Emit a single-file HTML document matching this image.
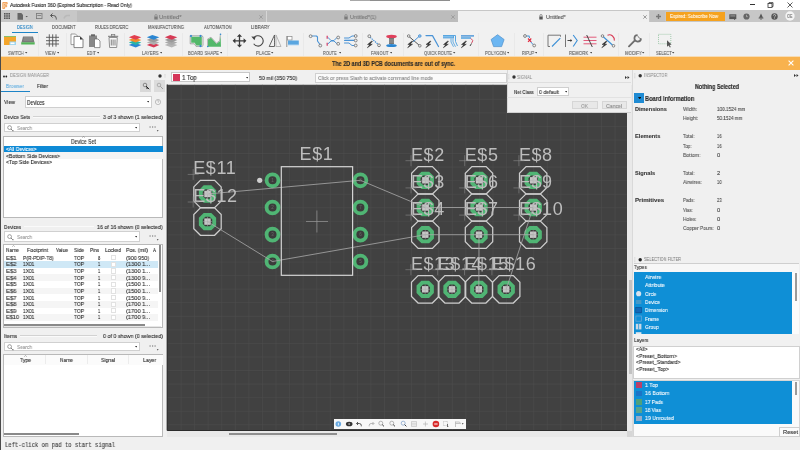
<!DOCTYPE html><html><head><meta charset="utf-8"><style>*{margin:0;padding:0;box-sizing:border-box}html,body{width:800px;height:450px;overflow:hidden;background:#f0f0f0;font-family:"Liberation Sans",sans-serif;color:#333}.a{position:absolute}.t{position:absolute;white-space:nowrap;line-height:1;transform-origin:0 50%;will-change:transform;-webkit-text-stroke:0.12px currentColor}</style></head><body>
<div class="a" style="left:0px;top:0px;width:800px;height:10.5px;background:#ffffff;"></div>
<svg class="a" style="left:2px;top:2px" width="6" height="7" viewBox="0 0 6 7"><path d="M0.8 0.5h4.4v1.6h-2.6v1.2h2.1v1.5h-2.1v1.8h-1.8z" fill="#f9d9b5" stroke="#f08a2e" stroke-width="0.7"/></svg>
<div class="a" style="left:750px;top:4.3px;width:4.5px;height:0.8px;background:#333;"></div>
<svg class="a" style="left:767px;top:1.5px" width="7" height="6" viewBox="0 0 7 6"><rect x="1" y="1.5" width="4" height="4" fill="none" stroke="#333" stroke-width="0.8"/><path d="M2 1.5V0.6h4v4h-1" fill="none" stroke="#333" stroke-width="0.8"/></svg>
<svg class="a" style="left:787px;top:1.5px" width="6" height="6" viewBox="0 0 6 6"><path d="M0.5 0.5L5.5 5.5M5.5 0.5L0.5 5.5" stroke="#333" stroke-width="0.8"/></svg>
<div class="a" style="left:1px;top:10px;width:799px;height:12.2px;background:#c7c7c7;"></div>
<div class="a" style="left:76.6px;top:10.5px;width:189.7px;height:11.7px;background:#bcbcbc;"></div>
<div class="a" style="left:266.3px;top:10.5px;width:192.1px;height:11.7px;background:#bcbcbc;"></div>
<div class="a" style="left:266px;top:11px;width:0.7px;height:11px;background:#d6d6d6;"></div>
<div class="a" style="left:458.4px;top:11.2px;width:191.1px;height:11px;background:#f0f0f0;"></div>
<div class="a" style="left:649.5px;top:10.5px;width:15px;height:12px;background:#c2c2c2;"></div>
<div class="a" style="left:666px;top:11.5px;width:58.5px;height:9.5px;background:#f5a21f;"></div>
<svg class="a" style="left:651px;top:11px" width="14" height="11" viewBox="0 0 14 11"><path d="M5 5.5h5M7.5 3v5" stroke="#777" stroke-width="1.4"/></svg>
<svg class="a" style="left:153.8px;top:13.5px" width="4" height="6" viewBox="0 0 4 6"><path d="M0.9 2.6V1.6a1.1 1.1 0 0 1 2.2 0v1" fill="none" stroke="#7a7a7a" stroke-width="0.6"/><rect x="0.3" y="2.5" width="3.4" height="3" fill="#7a7a7a"/></svg>
<svg class="a" style="left:344.2px;top:13.5px" width="4" height="6" viewBox="0 0 4 6"><path d="M0.9 2.6V1.6a1.1 1.1 0 0 1 2.2 0v1" fill="none" stroke="#7a7a7a" stroke-width="0.6"/><rect x="0.3" y="2.5" width="3.4" height="3" fill="#7a7a7a"/></svg>
<svg class="a" style="left:539.2px;top:13.5px" width="4" height="6" viewBox="0 0 4 6"><path d="M0.9 2.6V1.6a1.1 1.1 0 0 1 2.2 0v1" fill="none" stroke="#555" stroke-width="0.6"/><rect x="0.3" y="2.5" width="3.4" height="3" fill="#555"/></svg>
<svg class="a" style="left:259.4px;top:14.5px" width="4" height="4" viewBox="0 0 4 4"><path d="M0.3 0.3L3.7 3.7M3.7 0.3L0.3 3.7" stroke="#8a8a8a" stroke-width="0.6"/></svg>
<svg class="a" style="left:450.8px;top:14.5px" width="4" height="4" viewBox="0 0 4 4"><path d="M0.3 0.3L3.7 3.7M3.7 0.3L0.3 3.7" stroke="#8a8a8a" stroke-width="0.6"/></svg>
<svg class="a" style="left:642.5px;top:14.5px" width="4" height="4" viewBox="0 0 4 4"><path d="M0.3 0.3L3.7 3.7M3.7 0.3L0.3 3.7" stroke="#666" stroke-width="0.6"/></svg>
<svg class="a" style="left:4px;top:13px" width="6.5" height="6.5" viewBox="0 0 6.5 6.5" fill="#555"><rect x="0.0" y="0.0" width="1.6" height="1.6"/><rect x="0.0" y="2.2" width="1.6" height="1.6"/><rect x="0.0" y="4.4" width="1.6" height="1.6"/><rect x="2.2" y="0.0" width="1.6" height="1.6"/><rect x="2.2" y="2.2" width="1.6" height="1.6"/><rect x="2.2" y="4.4" width="1.6" height="1.6"/><rect x="4.4" y="0.0" width="1.6" height="1.6"/><rect x="4.4" y="2.2" width="1.6" height="1.6"/><rect x="4.4" y="4.4" width="1.6" height="1.6"/></svg>
<svg class="a" style="left:17px;top:12.8px" width="12" height="7" viewBox="0 0 12 7"><path d="M0.5 0h3.8l1.7 1.7V6.8H0.5z" fill="#666"/><path d="M8.5 3h2.4l-1.2 1.3z" fill="#555"/></svg>
<svg class="a" style="left:36px;top:13.3px" width="6.5" height="6" viewBox="0 0 6.5 6"><rect x="0.4" y="0.4" width="5.6" height="5.2" fill="none" stroke="#777" stroke-width="0.8"/><rect x="1.3" y="2.2" width="3.8" height="0.8" fill="#777"/></svg>
<svg class="a" style="left:50px;top:13.3px" width="7" height="6.5" viewBox="0 0 7 6.5"><path d="M2.5 0.5L0.5 2.5l2 2" fill="none" stroke="#555" stroke-width="1"/><path d="M0.8 2.5h2.5a3 3 0 0 1 3 3v1" fill="none" stroke="#555" stroke-width="1"/></svg>
<svg class="a" style="left:63px;top:13.5px" width="8" height="5" viewBox="0 0 8 5"><path d="M1 4.5Q2 1 5 1.5h2" fill="none" stroke="#b9b9b9" stroke-width="1.4"/></svg>
<svg class="a" style="left:729px;top:13.5px" width="8" height="6.5" viewBox="0 0 8 6.5"><rect x="0.3" y="0.3" width="7" height="4.8" fill="#555"/><path d="M5 5v1.3l1.3-1.3z" fill="#555"/><rect x="1.3" y="1.6" width="5" height="0.7" fill="#bbb"/></svg>
<svg class="a" style="left:743px;top:12.8px" width="7" height="7" viewBox="0 0 7 7"><circle cx="3.5" cy="3.5" r="3.1" fill="#666"/><path d="M3.5 1.8v1.9h1.3" fill="none" stroke="#ccc" stroke-width="0.6"/></svg>
<svg class="a" style="left:757.5px;top:12.5px" width="6" height="7" viewBox="0 0 6 7"><path d="M3 0.4L5 4.8H1z" fill="#555"/><rect x="0.6" y="4.6" width="4.8" height="0.9" fill="#555"/><circle cx="3" cy="6.2" r="0.6" fill="#555"/></svg>
<svg class="a" style="left:770.5px;top:12.5px" width="7" height="7" viewBox="0 0 7 7"><circle cx="3.5" cy="3.5" r="3.2" fill="#555"/><path d="M2.4 2.6a1.1 1.1 0 1 1 1.5 1l-0.4 0.3v0.6" fill="none" stroke="#ddd" stroke-width="0.7"/><circle cx="3.5" cy="5.4" r="0.4" fill="#ddd"/></svg>
<svg class="a" style="left:785px;top:11px" width="10" height="10" viewBox="0 0 10 10"><circle cx="5" cy="5" r="4.7" fill="#f4f4f4"/></svg>
<div class="a" style="left:1px;top:22.2px;width:799px;height:34.5px;background:#f1f1f1;"></div>
<div class="a" style="left:12.3px;top:31.7px;width:25.9px;height:1.3px;background:#1d84c7;"></div>
<div class="a" style="left:38.2px;top:33px;width:0.6px;height:23px;background:#e9e9e9;"></div>
<div class="a" style="left:65.5px;top:33px;width:0.6px;height:23px;background:#e9e9e9;"></div>
<div class="a" style="left:123.5px;top:33px;width:0.6px;height:23px;background:#e9e9e9;"></div>
<div class="a" style="left:181.7px;top:33px;width:0.6px;height:23px;background:#e9e9e9;"></div>
<div class="a" style="left:227.3px;top:33px;width:0.6px;height:23px;background:#e9e9e9;"></div>
<div class="a" style="left:303px;top:33px;width:0.6px;height:23px;background:#e9e9e9;"></div>
<div class="a" style="left:361.6px;top:33px;width:0.6px;height:23px;background:#e9e9e9;"></div>
<div class="a" style="left:402.6px;top:33px;width:0.6px;height:23px;background:#e9e9e9;"></div>
<div class="a" style="left:478px;top:33px;width:0.6px;height:23px;background:#e9e9e9;"></div>
<div class="a" style="left:514px;top:33px;width:0.6px;height:23px;background:#e9e9e9;"></div>
<div class="a" style="left:542.6px;top:33px;width:0.6px;height:23px;background:#e9e9e9;"></div>
<div class="a" style="left:618px;top:33px;width:0.6px;height:23px;background:#e9e9e9;"></div>
<div class="a" style="left:649.4px;top:33px;width:0.6px;height:23px;background:#e9e9e9;"></div>
<svg class="a" style="left:25.400000000000002px;top:52px" width="2.4" height="1.6" viewBox="0 0 2.4 1.6"><path d="M0 0h2.4l-1.2 1.6z" fill="#444"/></svg>
<svg class="a" style="left:56.599999999999994px;top:52px" width="2.4" height="1.6" viewBox="0 0 2.4 1.6"><path d="M0 0h2.4l-1.2 1.6z" fill="#444"/></svg>
<svg class="a" style="left:96.8px;top:52px" width="2.4" height="1.6" viewBox="0 0 2.4 1.6"><path d="M0 0h2.4l-1.2 1.6z" fill="#444"/></svg>
<svg class="a" style="left:159.8px;top:52px" width="2.4" height="1.6" viewBox="0 0 2.4 1.6"><path d="M0 0h2.4l-1.2 1.6z" fill="#444"/></svg>
<svg class="a" style="left:219.8px;top:52px" width="2.4" height="1.6" viewBox="0 0 2.4 1.6"><path d="M0 0h2.4l-1.2 1.6z" fill="#444"/></svg>
<svg class="a" style="left:271.40000000000003px;top:52px" width="2.4" height="1.6" viewBox="0 0 2.4 1.6"><path d="M0 0h2.4l-1.2 1.6z" fill="#444"/></svg>
<svg class="a" style="left:338.6px;top:52px" width="2.4" height="1.6" viewBox="0 0 2.4 1.6"><path d="M0 0h2.4l-1.2 1.6z" fill="#444"/></svg>
<svg class="a" style="left:389.8px;top:52px" width="2.4" height="1.6" viewBox="0 0 2.4 1.6"><path d="M0 0h2.4l-1.2 1.6z" fill="#444"/></svg>
<svg class="a" style="left:453.40000000000003px;top:52px" width="2.4" height="1.6" viewBox="0 0 2.4 1.6"><path d="M0 0h2.4l-1.2 1.6z" fill="#444"/></svg>
<svg class="a" style="left:506.8px;top:52px" width="2.4" height="1.6" viewBox="0 0 2.4 1.6"><path d="M0 0h2.4l-1.2 1.6z" fill="#444"/></svg>
<svg class="a" style="left:534.8px;top:52px" width="2.4" height="1.6" viewBox="0 0 2.4 1.6"><path d="M0 0h2.4l-1.2 1.6z" fill="#444"/></svg>
<svg class="a" style="left:589.5px;top:52px" width="2.4" height="1.6" viewBox="0 0 2.4 1.6"><path d="M0 0h2.4l-1.2 1.6z" fill="#444"/></svg>
<svg class="a" style="left:642.4px;top:52px" width="2.4" height="1.6" viewBox="0 0 2.4 1.6"><path d="M0 0h2.4l-1.2 1.6z" fill="#444"/></svg>
<svg class="a" style="left:672.4px;top:52px" width="2.4" height="1.6" viewBox="0 0 2.4 1.6"><path d="M0 0h2.4l-1.2 1.6z" fill="#444"/></svg>
<div class="a" style="left:1px;top:55.8px;width:799px;height:1px;background:#f7dcb4;"></div>
<div class="a" style="left:1px;top:56.7px;width:799px;height:13.3px;background:#f8b24e;"></div>
<svg class="a" style="left:787.5px;top:60px" width="6" height="6" viewBox="0 0 6 6"><path d="M0.6 0.6L5.4 5.4M5.4 0.6L0.6 5.4" stroke="#fff" stroke-width="1.1"/></svg>
<div class="a" style="left:0px;top:0px;width:1.3px;height:450px;background:#4a4a4a;"></div>
<svg class="a" style="left:0;top:0" width="800" height="60" viewBox="0 0 800 60"><rect x="4" y="36" width="12" height="9" fill="#f4a52a"/><rect x="4" y="36" width="12" height="1" fill="#8bbf6a"/><rect x="9.5" y="41.5" width="6.5" height="3.5" fill="#9ed5ef"/><rect x="10.5" y="42.5" width="4" height="1.6" fill="#fff"/><path d="M23 36.5h10l1.5 6h-13z" fill="#7a7a7a"/><path d="M24 38h8M23.5 40h9" stroke="#bbb" stroke-width="0.5"/><rect x="21.2" y="42.3" width="13.5" height="2.2" fill="#55b55a"/><path d="M49.3 34.3v12.4M52.7 34.3v12.4M56 34.3v12.4M46 37.3h13M46 40.7h13M46 44h13" stroke="#555" stroke-width="0.9"/><path d="M71 34h4.5l2 2v8.6H71z" fill="#fff" stroke="#777" stroke-width="0.7"/><path d="M74 36.4h6l3 3v8.2H74z" fill="#fff" stroke="#666" stroke-width="0.8"/><path d="M80 36.4l3 3h-3z" fill="#333"/><path d="M89 35.5h8v11.5h-8z" fill="#888"/><rect x="91" y="34.3" width="4" height="2" fill="#666"/><path d="M94.5 39h3.5l2 2v6.6h-5.5z" fill="#fff" stroke="#666" stroke-width="0.7"/><path d="M108 36.3h10.2" stroke="#777" stroke-width="1"/><rect x="111.5" y="34.6" width="3.3" height="1.6" fill="none" stroke="#777" stroke-width="0.7"/><path d="M109 37.5h8.3l-0.6 10h-7.1z" fill="#f6f6f6" stroke="#777" stroke-width="0.8"/><path d="M111.3 39.5v6M113.1 39.5v6M115 39.5v6" stroke="#777" stroke-width="0.9"/><path d="M128.8 45.099999999999994L134.3 42.8L141.3 45.099999999999994L135.8 47.599999999999994z" fill="#2a86d2"/><path d="M128.8 42.5L134.3 40.2L141.3 42.5L135.8 45.0z" fill="#26b5a8"/><path d="M128.8 39.9L134.3 37.6L141.3 39.9L135.8 42.4z" fill="#f08c2c"/><path d="M128.8 37.3L134.3 35.0L141.3 37.3L135.8 39.8z" fill="#e23f4f"/><path d="M146.8 45.099999999999994L152.3 42.8L159.3 45.099999999999994L153.8 47.599999999999994z" fill="#d63a55"/><path d="M146.8 42.5L152.3 40.2L159.3 42.5L153.8 45.0z" fill="#b0b0b0"/><path d="M146.8 39.9L152.3 37.6L159.3 39.9L153.8 42.4z" fill="#9a9a9a"/><path d="M146.8 37.3L152.3 35.0L159.3 37.3L153.8 39.8z" fill="#2a86d2"/><path d="M164.8 45.099999999999994L170.3 42.8L177.3 45.099999999999994L171.8 47.599999999999994z" fill="#b5b5b5"/><path d="M164.8 42.5L170.3 40.2L177.3 42.5L171.8 45.0z" fill="#aaaaaa"/><path d="M164.8 39.9L170.3 37.6L177.3 39.9L171.8 42.4z" fill="#9a9a9a"/><path d="M164.8 37.3L170.3 35.0L177.3 37.3L171.8 39.8z" fill="#d63a55"/><path d="M190.2 35.8h12l0.8 1.2v8.6l-0.8 0.8h-6.2l-1.6-2.6h-4.2z" fill="#f1f1f1" stroke="#8a8a8a" stroke-width="0.7"/><path d="M191.2 36.8h10.6v8.6h-5.5l-1.6-2.6h-3.5z" fill="#53b86a"/><circle cx="191" cy="36" r="0.9" fill="#2a86d2" stroke="#2a86d2" stroke-width="0.3"/><circle cx="200.5" cy="36" r="0.9" fill="#2a86d2" stroke="#2a86d2" stroke-width="0.3"/><circle cx="200.5" cy="46" r="0.9" fill="#2a86d2" stroke="#2a86d2" stroke-width="0.3"/><path d="M208 46.8V39.5L211 37.8L216.5 43.8L219.8 41.2L220.6 35.5L221 46.8z" fill="#53b86a"/><path d="M207.6 46.8V39L211 37.2L216.5 43.2L219.6 40.6L220.4 34.5" fill="none" stroke="#8a8a8a" stroke-width="0.6"/><circle cx="220.5" cy="34.3" r="0.8" fill="#2a86d2"/><circle cx="207.8" cy="46.5" r="0.8" fill="#2a86d2"/><path d="M239.5 36v9.6M234.5 40.8h10" stroke="#3a3a3a" stroke-width="1.3"/><path d="M239.5 34l-2.6 2.8h5.2zM239.5 47.6l-2.6-2.8h5.2zM232.6 40.8l2.8-2.6v5.2zM246.4 40.8l-2.8-2.6v5.2z" fill="#3a3a3a"/><path d="M253.5 38.3a5.2 5.2 0 1 1 0.2 5.5" fill="none" stroke="#444" stroke-width="1.1"/><path d="M251.3 36.5l3.2 3.8l1.2-3.5z" fill="#444"/><path d="M274.5 35l-5.3 11.5h5.3z" fill="none" stroke="#555" stroke-width="0.9"/><path d="M276 35l5 11.5h-5z" fill="none" stroke="#aaa" stroke-width="0.8"/><path d="M275.2 34v13.5" stroke="#ccc" stroke-width="0.5" stroke-dasharray="1 1"/><path d="M286.8 36v11" stroke="#888" stroke-width="0.9"/><rect x="287.5" y="36.5" width="4.5" height="3.5" fill="#fff" stroke="#888" stroke-width="0.7"/><rect x="288" y="40.5" width="10.8" height="4.5" fill="#5aa6e0"/><rect x="288" y="44.6" width="10.8" height="1.2" fill="#cfe4f5"/><polyline points="311.5,36 316.5,36 317.5,37 317.5,41 320,44.5" fill="none" stroke="#4a93d6" stroke-width="1.1" stroke-linejoin="round" stroke-linecap="round"/><circle cx="310.6" cy="36.2" r="1.4" fill="#f1f1f1" stroke="#777" stroke-width="0.9"/><circle cx="320.3" cy="45.6" r="1.4" fill="#f1f1f1" stroke="#777" stroke-width="0.9"/><path d="M327.2 35.8v3M327.2 42.8v3" stroke="#e0456a" stroke-width="1.3"/><polyline points="328,37.5 331,40.5 334,40.5 337,37.5" fill="none" stroke="#4a93d6" stroke-width="1" stroke-linejoin="round" stroke-linecap="round"/><polyline points="328,43.8 331,41 334,41 337,43.8" fill="none" stroke="#4a93d6" stroke-width="1" stroke-linejoin="round" stroke-linecap="round"/><circle cx="338.2" cy="37.5" r="1.4" fill="#f1f1f1" stroke="#777" stroke-width="0.9"/><circle cx="338.2" cy="43.8" r="1.4" fill="#f1f1f1" stroke="#777" stroke-width="0.9"/><polyline points="344.5,38 349,38 352,36 354.5,36" fill="none" stroke="#4a93d6" stroke-width="1" stroke-linejoin="round" stroke-linecap="round"/><polyline points="344.5,40.5 354.5,40.5" fill="none" stroke="#4a93d6" stroke-width="1" stroke-linejoin="round" stroke-linecap="round"/><path d="M344.5 39.4h10" stroke="#9cc6ec" stroke-width="0.7"/><polyline points="344.5,43 349,43 352,45.5 354.5,45.5" fill="none" stroke="#4a93d6" stroke-width="1" stroke-linejoin="round" stroke-linecap="round"/><circle cx="355.7" cy="36" r="1.4" fill="#f1f1f1" stroke="#777" stroke-width="0.9"/><circle cx="355.7" cy="40.5" r="1.4" fill="#f1f1f1" stroke="#777" stroke-width="0.9"/><circle cx="355.7" cy="45.5" r="1.4" fill="#f1f1f1" stroke="#777" stroke-width="0.9"/><path d="M370 37.2l8.5 7.5" stroke="#4a93d6" stroke-width="1.2" stroke-dasharray="1.4 0.8"/><circle cx="369.3" cy="36.2" r="1.4" fill="#f1f1f1" stroke="#777" stroke-width="0.9"/><circle cx="379" cy="45.3" r="1.4" fill="#f1f1f1" stroke="#777" stroke-width="0.9"/><path d="M371.5 41.2l-4 3.3h2.4l-2.6 3.3 5-3.6h-2.4l2.6-3z" fill="#2a2a2a" stroke="#2a2a2a" stroke-width="0.45" stroke-linejoin="round"/><ellipse cx="391.5" cy="36.5" rx="5.3" ry="1.8" fill="#e0405c"/><rect x="389" y="38" width="5" height="6" fill="#777"/><path d="M389 40h5M389 42h5" stroke="#bbb" stroke-width="0.5"/><ellipse cx="391.5" cy="45.5" rx="5.3" ry="1.6" fill="#2a86d2"/><polyline points="409,36.5 419.5,45.5" fill="none" stroke="#444" stroke-width="0.9" stroke-linejoin="round" stroke-linecap="round"/><polyline points="419,36.5 413.5,41.5" fill="none" stroke="#4a93d6" stroke-width="1" stroke-linejoin="round" stroke-linecap="round"/><circle cx="408.7" cy="36" r="1.3" fill="#f1f1f1" stroke="#777" stroke-width="0.9"/><circle cx="419.8" cy="36" r="1.3" fill="#9cc6ec" stroke="#4a93d6" stroke-width="0.9"/><circle cx="419.8" cy="45.8" r="1.3" fill="#f1f1f1" stroke="#777" stroke-width="0.9"/><path d="M411.8 41.2l-4 3.3h2.4l-2.6 3.3 5-3.6h-2.4l2.6-3z" fill="#2a2a2a" stroke="#2a2a2a" stroke-width="0.45" stroke-linejoin="round"/><polyline points="426,35.6 432.5,35.6 438.5,46.5" fill="none" stroke="#4a93d6" stroke-width="1.2" stroke-linejoin="round" stroke-linecap="round"/><path d="M430 41.2l-4 3.3h2.4l-2.6 3.3 5-3.6h-2.4l2.6-3z" fill="#2a2a2a" stroke="#2a2a2a" stroke-width="0.45" stroke-linejoin="round"/><path d="M443 35.5h12.5v6l2 4.5" fill="none" stroke="#5aa6e0" stroke-width="1"/><rect x="443" y="35.2" width="11" height="3.2" fill="#5aa6e0"/><path d="M443 36.8h10" stroke="#bfe0f8" stroke-width="0.6"/><path d="M453 38.5v3.5l2.5 4.8M451 38.5v3.5l2.5 4.8" fill="none" stroke="#5aa6e0" stroke-width="0.9"/><path d="M447.5 41.2l-4 3.3h2.4l-2.6 3.3 5-3.6h-2.4l2.6-3z" fill="#2a2a2a" stroke="#2a2a2a" stroke-width="0.45" stroke-linejoin="round"/><rect x="461" y="35.2" width="13" height="1.4" fill="#4a93d6"/><rect x="461" y="37.2" width="10" height="1.6" fill="#5aa6e0"/><path d="M471 38.5l1.8 2.2-1.2 2.5" fill="none" stroke="#d33a55" stroke-width="0.9"/><path d="M471.5 43.5l-1.5 2.5" stroke="#333" stroke-width="0.9"/><path d="M465.5 41.2l-4 3.3h2.4l-2.6 3.3 5-3.6h-2.4l2.6-3z" fill="#2a2a2a" stroke="#2a2a2a" stroke-width="0.45" stroke-linejoin="round"/><path d="M497.6 34.7l6.5 4.8-2.5 7.1h-8l-2.5-7.1z" fill="#6cb6f2" stroke="#4d8fcc" stroke-width="0.7"/><polyline points="526.3,36 529,36 529.5,37.5" fill="none" stroke="#4a93d6" stroke-width="1.1" stroke-linejoin="round" stroke-linecap="round"/><polyline points="530.5,41.5 533,44.5" fill="none" stroke="#4a93d6" stroke-width="1" stroke-linejoin="round" stroke-linecap="round"/><path d="M528 38.5l3.3 3.3M531.3 38.5l-3.3 3.3" stroke="#e0253a" stroke-width="1.1"/><circle cx="525" cy="36" r="1.4" fill="#f1f1f1" stroke="#777" stroke-width="0.9"/><circle cx="534.2" cy="45.5" r="1.4" fill="#f1f1f1" stroke="#777" stroke-width="0.9"/><path d="M548 46.5v-11.3h12.5v1.5" fill="none" stroke="#777" stroke-width="1"/><path d="M552 46.5l8.3-8.3" stroke="#3b8fd6" stroke-width="1.1"/><path d="M548 46.5h2" stroke="#777" stroke-width="1"/><path d="M565.5 34.5v12.5" stroke="#777" stroke-width="1"/><path d="M567.5 40.5h3.5" stroke="#333" stroke-width="0.9"/><path d="M570.5 39l1.7 1.5-1.7 1.5z" fill="#333"/><path d="M573.2 35l4 5.5-4 6" fill="none" stroke="#3b8fd6" stroke-width="1.1"/><path d="M583.5 37.2h13M583.5 40.5h13M583.5 43.8h13" stroke="#e25a7a" stroke-width="1"/><path d="M586.7 35l5.6 12" stroke="#333" stroke-width="0.9"/><path d="M607.5 35.2a5 5 0 0 1 6.8 5.5" fill="none" stroke="#d83a55" stroke-width="1.1"/><path d="M603 36.5l10 9" stroke="#3b8fd6" stroke-width="1.1"/><circle cx="602.5" cy="36" r="1.3" fill="#f1f1f1" stroke="#777" stroke-width="0.9"/><circle cx="613.5" cy="45.8" r="1.3" fill="#f1f1f1" stroke="#777" stroke-width="0.9"/><path d="M606 41.2l-4 3.3h2.4l-2.6 3.3 5-3.6h-2.4l2.6-3z" fill="#2a2a2a" stroke="#2a2a2a" stroke-width="0.45" stroke-linejoin="round"/><path d="M629 46.3l5.4-5.4" stroke="#6e6e6e" stroke-width="1.9" stroke-linecap="round"/><path d="M637.6 35a3.3 3.3 0 1 0 3.4 3.4" fill="none" stroke="#6e6e6e" stroke-width="1.7"/><path d="M637.6 35.6l1.2 2.1 2.1 1.1" fill="none" stroke="#6e6e6e" stroke-width="0.8"/><rect x="658.5" y="34.3" width="12.3" height="9.5" fill="none" stroke="#8dbf9a" stroke-width="0.8" stroke-dasharray="1 1"/><path d="M667 40.3v6.5l1.6-1.4 1.3 2 0.9-0.5-1.2-2 2-0.3z" fill="#555"/></svg>
<div class="a" style="left:1.3px;top:70px;width:164px;height:367px;background:#f0f0f0;"></div>
<svg class="a" style="left:2.5px;top:74.5px" width="5" height="3" viewBox="0 0 5 3"><circle cx="1" cy="1.5" r="0.9" fill="#222"/><circle cx="3.3" cy="1.5" r="0.9" fill="#222"/></svg>
<svg class="a" style="left:157.5px;top:73.5px" width="9" height="4" viewBox="0 0 9 4"><circle cx="2" cy="2" r="1.7" fill="#333"/><path d="M7 0.3v3.4" stroke="#aaa" stroke-width="0.6" stroke-dasharray="0.6 0.6"/></svg>
<div class="a" style="left:1.3px;top:90.6px;width:29px;height:1.3px;background:#1d84c7;"></div>
<div class="a" style="left:140px;top:80px;width:11px;height:11.7px;background:#d8d8d8;"></div>
<div class="a" style="left:154px;top:80px;width:11px;height:11.7px;background:#dcdcdc;"></div>
<svg class="a" style="left:142px;top:82px" width="8" height="8" viewBox="0 0 8 8"><circle cx="3" cy="3" r="1.8" fill="none" stroke="#666" stroke-width="0.7"/><path d="M4 4l3.2 3.2" stroke="#333" stroke-width="1"/><path d="M4.5 4.2v3l0.8-0.8 1.8 0.5z" fill="#222"/></svg>
<svg class="a" style="left:156px;top:82px" width="8" height="8" viewBox="0 0 8 8"><circle cx="3" cy="3" r="1.8" fill="none" stroke="#999" stroke-width="0.7"/><path d="M4.2 4.2l2.8 2.8" stroke="#999" stroke-width="0.9"/></svg>
<div class="a" style="left:25px;top:96.2px;width:126.6px;height:11.5px;background:#fff;border:0.7px solid #cfcfcf"></div>
<svg class="a" style="left:146.8px;top:101.3px" width="2.4" height="1.6" viewBox="0 0 2.4 1.6"><path d="M0 0h2.4l-1.2 1.6z" fill="#2e2e2e"/></svg>
<svg class="a" style="left:154.5px;top:99px" width="6" height="6" viewBox="0 0 6 6"><circle cx="3" cy="3" r="2.6" fill="#f6f6f6" stroke="#999" stroke-width="0.6"/><path d="M2.2 2.3a0.8 0.8 0 1 1 1 0.8v0.6" fill="none" stroke="#888" stroke-width="0.5"/></svg>
<div class="a" style="left:33px;top:116.1px;width:67px;height:0.8px;background:#d2d2d2;"></div>
<div class="a" style="left:33px;top:116.9px;width:67px;height:0.5px;background:#fafafa;"></div>
<div class="a" style="left:4px;top:122.8px;width:135.5px;height:9.700000000000003px;background:#fff;border:0.7px solid #d0d0d0"></div>
<svg class="a" style="left:6.5px;top:124.65px" width="8" height="7" viewBox="0 0 8 7"><circle cx="2.6" cy="2.6" r="1.9" fill="none" stroke="#777" stroke-width="0.7"/><path d="M4 4l1.6 1.6" stroke="#777" stroke-width="0.9"/><path d="M5.2 5.6h1.6l-0.8 1z" fill="#2e2e2e"/></svg>
<svg class="a" style="left:134.8px;top:127.05000000000001px" width="2.4" height="1.6" viewBox="0 0 2.4 1.6"><path d="M0 0h2.4l-1.2 1.6z" fill="#2e2e2e"/></svg>
<svg class="a" style="left:148.5px;top:125.65px" width="10" height="6" viewBox="0 0 10 6"><path d="M0.5 1h1.2M3 1h1.2M5.5 1h1.2" stroke="#444" stroke-width="0.8"/><path d="M7.8 4.2h1.8l-0.9 1.2z" fill="#333"/></svg>
<div class="a" style="left:3.4px;top:136px;width:159.4px;height:82px;background:#fff;border:0.7px solid #b9b9b9"></div>
<svg class="a" style="left:82px;top:135.6px" width="3" height="2" viewBox="0 0 3 2"><path d="M0.2 1.8L1.5 0.4 2.8 1.8" fill="none" stroke="#777" stroke-width="0.5"/></svg>
<div class="a" style="left:4.3px;top:146px;width:158.6px;height:6.2px;background:#0e8ad6;"></div>
<div class="a" style="left:4.3px;top:152.2px;width:158.6px;height:6.8px;background:#f4f4f4;"></div>
<div class="a" style="left:24px;top:225.6px;width:69.7px;height:0.8px;background:#d2d2d2;"></div>
<div class="a" style="left:24px;top:226.4px;width:69.7px;height:0.5px;background:#fafafa;"></div>
<div class="a" style="left:4px;top:231.3px;width:135.5px;height:11.199999999999989px;background:#fff;border:0.7px solid #d0d0d0"></div>
<svg class="a" style="left:6.5px;top:233.9px" width="8" height="7" viewBox="0 0 8 7"><circle cx="2.6" cy="2.6" r="1.9" fill="none" stroke="#777" stroke-width="0.7"/><path d="M4 4l1.6 1.6" stroke="#777" stroke-width="0.9"/><path d="M5.2 5.6h1.6l-0.8 1z" fill="#2e2e2e"/></svg>
<svg class="a" style="left:134.8px;top:236.3px" width="2.4" height="1.6" viewBox="0 0 2.4 1.6"><path d="M0 0h2.4l-1.2 1.6z" fill="#2e2e2e"/></svg>
<svg class="a" style="left:148.5px;top:234.9px" width="10" height="6" viewBox="0 0 10 6"><path d="M0.5 1h1.2M3 1h1.2M5.5 1h1.2" stroke="#444" stroke-width="0.8"/><path d="M7.8 4.2h1.8l-0.9 1.2z" fill="#333"/></svg>
<div class="a" style="left:3.4px;top:244px;width:159.4px;height:84px;background:#fff;border:0.7px solid #b9b9b9"></div>
<svg class="a" style="left:11.5px;top:244.6px" width="3" height="2" viewBox="0 0 3 2"><path d="M0.2 1.8L1.5 0.4 2.8 1.8" fill="none" stroke="#777" stroke-width="0.5"/></svg>
<div class="a" style="left:110.7px;top:255.20000000000002px;width:5.2px;height:5.2px;background:#fff;border:0.6px solid #e2e2e2"></div>
<div class="a" style="left:4.3px;top:261.13px;width:153.5px;height:6.6px;background:#cfe8f6;"></div>
<div class="a" style="left:110.7px;top:261.83px;width:5.2px;height:5.2px;background:#fff;border:0.6px solid #e2e2e2"></div>
<div class="a" style="left:110.7px;top:268.46px;width:5.2px;height:5.2px;background:#fff;border:0.6px solid #e2e2e2"></div>
<div class="a" style="left:4.3px;top:274.39px;width:153.5px;height:6.6px;background:#f5f5f5;"></div>
<div class="a" style="left:110.7px;top:275.09px;width:5.2px;height:5.2px;background:#fff;border:0.6px solid #e2e2e2"></div>
<div class="a" style="left:110.7px;top:281.71999999999997px;width:5.2px;height:5.2px;background:#fff;border:0.6px solid #e2e2e2"></div>
<div class="a" style="left:4.3px;top:287.65px;width:153.5px;height:6.6px;background:#f5f5f5;"></div>
<div class="a" style="left:110.7px;top:288.34999999999997px;width:5.2px;height:5.2px;background:#fff;border:0.6px solid #e2e2e2"></div>
<div class="a" style="left:110.7px;top:294.98px;width:5.2px;height:5.2px;background:#fff;border:0.6px solid #e2e2e2"></div>
<div class="a" style="left:4.3px;top:300.91px;width:153.5px;height:6.6px;background:#f5f5f5;"></div>
<div class="a" style="left:110.7px;top:301.61px;width:5.2px;height:5.2px;background:#fff;border:0.6px solid #e2e2e2"></div>
<div class="a" style="left:110.7px;top:308.24px;width:5.2px;height:5.2px;background:#fff;border:0.6px solid #e2e2e2"></div>
<div class="a" style="left:4.3px;top:314.17px;width:153.5px;height:6.6px;background:#f5f5f5;"></div>
<div class="a" style="left:110.7px;top:314.87px;width:5.2px;height:5.2px;background:#fff;border:0.6px solid #e2e2e2"></div>
<div class="a" style="left:158.6px;top:245px;width:2.2px;height:47px;background:#8a8a8a;"></div>
<div class="a" style="left:4.3px;top:323.6px;width:141px;height:2px;background:#8a8a8a;"></div>
<div class="a" style="left:4.3px;top:325.8px;width:157px;height:0.6px;background:#e6e6e6;"></div>
<div class="a" style="left:20px;top:335.1px;width:77px;height:0.8px;background:#d2d2d2;"></div>
<div class="a" style="left:20px;top:335.9px;width:77px;height:0.5px;background:#fafafa;"></div>
<div class="a" style="left:4px;top:342px;width:135.5px;height:9.300000000000011px;background:#fff;border:0.7px solid #d0d0d0"></div>
<svg class="a" style="left:6.5px;top:343.65px" width="8" height="7" viewBox="0 0 8 7"><circle cx="2.6" cy="2.6" r="1.9" fill="none" stroke="#777" stroke-width="0.7"/><path d="M4 4l1.6 1.6" stroke="#777" stroke-width="0.9"/><path d="M5.2 5.6h1.6l-0.8 1z" fill="#2e2e2e"/></svg>
<svg class="a" style="left:134.8px;top:346.04999999999995px" width="2.4" height="1.6" viewBox="0 0 2.4 1.6"><path d="M0 0h2.4l-1.2 1.6z" fill="#2e2e2e"/></svg>
<svg class="a" style="left:148.5px;top:344.65px" width="10" height="6" viewBox="0 0 10 6"><path d="M0.5 1h1.2M3 1h1.2M5.5 1h1.2" stroke="#444" stroke-width="0.8"/><path d="M7.8 4.2h1.8l-0.9 1.2z" fill="#333"/></svg>
<div class="a" style="left:3.4px;top:354px;width:159.4px;height:82.7px;background:#fff;border:0.7px solid #b9b9b9"></div>
<div class="a" style="left:4.3px;top:354.8px;width:158.6px;height:10px;background:#fbfbfb;"></div>
<div class="a" style="left:45px;top:355px;width:0.6px;height:9px;background:#ececec;"></div>
<div class="a" style="left:87px;top:355px;width:0.6px;height:9px;background:#ececec;"></div>
<div class="a" style="left:128px;top:355px;width:0.6px;height:9px;background:#ececec;"></div>
<svg class="a" style="left:24px;top:354.6px" width="3" height="2" viewBox="0 0 3 2"><path d="M0.2 1.8L1.5 0.4 2.8 1.8" fill="none" stroke="#777" stroke-width="0.5"/></svg>
<div class="a" style="left:4.3px;top:432.8px;width:75px;height:2px;background:#8a8a8a;"></div>
<div class="a" style="left:1.3px;top:437px;width:800px;height:13px;background:#f0f0f0;"></div>
<div class="a" style="left:167px;top:70px;width:466px;height:14.5px;background:#f0f0f0;"></div>
<div class="a" style="left:170.6px;top:72px;width:79.8px;height:10.4px;background:#fff;border:0.7px solid #c8c8c8"></div>
<div class="a" style="left:172.5px;top:73.6px;width:7.5px;height:7.4px;background:#d5365a;"></div>
<svg class="a" style="left:245.8px;top:77px" width="2.4" height="1.6" viewBox="0 0 2.4 1.6"><path d="M0 0h2.4l-1.2 1.6z" fill="#2e2e2e"/></svg>
<div class="a" style="left:314.8px;top:72.8px;width:192px;height:9.9px;background:#fafafa;border:0.7px solid #d0d0d0"></div>
<svg class="a" style="left:0;top:0;will-change:transform" width="800" height="450" viewBox="0 0 800 450"><defs><clipPath id="cc"><rect x="166.7" y="84.5" width="460.3" height="346"/></clipPath></defs><g clip-path="url(#cc)"><rect x="166.7" y="84.5" width="460.3" height="346" fill="#414141"/><path d="M167.51 84.5V431M181.07 84.5V431M194.64 84.5V431M208.20 84.5V431M221.76 84.5V431M235.32 84.5V431M248.89 84.5V431M262.45 84.5V431M276.01 84.5V431M289.57 84.5V431M303.14 84.5V431M316.70 84.5V431M330.26 84.5V431M343.82 84.5V431M357.39 84.5V431M370.95 84.5V431M384.51 84.5V431M398.07 84.5V431M411.64 84.5V431M425.20 84.5V431M438.76 84.5V431M452.32 84.5V431M465.89 84.5V431M479.45 84.5V431M493.01 84.5V431M506.57 84.5V431M520.14 84.5V431M533.70 84.5V431M547.26 84.5V431M560.83 84.5V431M574.39 84.5V431M587.95 84.5V431M601.51 84.5V431M615.08 84.5V431M167 85.71H627M167 99.28H627M167 112.84H627M167 126.40H627M167 139.96H627M167 153.53H627M167 167.09H627M167 180.65H627M167 194.21H627M167 207.78H627M167 221.34H627M167 234.90H627M167 248.46H627M167 262.02H627M167 275.59H627M167 289.15H627M167 302.71H627M167 316.27H627M167 329.84H627M167 343.40H627M167 356.96H627M167 370.52H627M167 384.09H627M167 397.65H627M167 411.21H627M167 424.77H627" stroke="#4e4e4e" stroke-width="0.55"/><polygon points="200.40,180.30 214.60,180.30 221.20,186.90 221.20,201.10 214.60,207.70 200.40,207.70 193.80,201.10 193.80,186.90" fill="none" stroke="#cdcdcd" stroke-width="1.25"/><polygon points="200.40,207.90 214.60,207.90 221.20,214.50 221.20,228.70 214.60,235.30 200.40,235.30 193.80,228.70 193.80,214.50" fill="none" stroke="#cdcdcd" stroke-width="1.25"/><polygon points="418.20,166.60 432.40,166.60 439.00,173.20 439.00,187.40 432.40,194.00 418.20,194.00 411.60,187.40 411.60,173.20" fill="none" stroke="#cdcdcd" stroke-width="1.25"/><polygon points="418.20,193.80 432.40,193.80 439.00,200.40 439.00,214.60 432.40,221.20 418.20,221.20 411.60,214.60 411.60,200.40" fill="none" stroke="#cdcdcd" stroke-width="1.25"/><polygon points="418.20,221.00 432.40,221.00 439.00,227.60 439.00,241.80 432.40,248.40 418.20,248.40 411.60,241.80 411.60,227.60" fill="none" stroke="#cdcdcd" stroke-width="1.25"/><polygon points="471.90,166.60 486.10,166.60 492.70,173.20 492.70,187.40 486.10,194.00 471.90,194.00 465.30,187.40 465.30,173.20" fill="none" stroke="#cdcdcd" stroke-width="1.25"/><polygon points="471.90,193.80 486.10,193.80 492.70,200.40 492.70,214.60 486.10,221.20 471.90,221.20 465.30,214.60 465.30,200.40" fill="none" stroke="#cdcdcd" stroke-width="1.25"/><polygon points="471.90,221.00 486.10,221.00 492.70,227.60 492.70,241.80 486.10,248.40 471.90,248.40 465.30,241.80 465.30,227.60" fill="none" stroke="#cdcdcd" stroke-width="1.25"/><polygon points="526.10,166.60 540.30,166.60 546.90,173.20 546.90,187.40 540.30,194.00 526.10,194.00 519.50,187.40 519.50,173.20" fill="none" stroke="#cdcdcd" stroke-width="1.25"/><polygon points="526.10,193.80 540.30,193.80 546.90,200.40 546.90,214.60 540.30,221.20 526.10,221.20 519.50,214.60 519.50,200.40" fill="none" stroke="#cdcdcd" stroke-width="1.25"/><polygon points="526.10,221.00 540.30,221.00 546.90,227.60 546.90,241.80 540.30,248.40 526.10,248.40 519.50,241.80 519.50,227.60" fill="none" stroke="#cdcdcd" stroke-width="1.25"/><polygon points="418.10,275.60 432.30,275.60 438.90,282.20 438.90,296.40 432.30,303.00 418.10,303.00 411.50,296.40 411.50,282.20" fill="none" stroke="#cdcdcd" stroke-width="1.25"/><polygon points="444.90,275.60 459.10,275.60 465.70,282.20 465.70,296.40 459.10,303.00 444.90,303.00 438.30,296.40 438.30,282.20" fill="none" stroke="#cdcdcd" stroke-width="1.25"/><polygon points="471.70,275.60 485.90,275.60 492.50,282.20 492.50,296.40 485.90,303.00 471.70,303.00 465.10,296.40 465.10,282.20" fill="none" stroke="#cdcdcd" stroke-width="1.25"/><polygon points="499.10,275.60 513.30,275.60 519.90,282.20 519.90,296.40 513.30,303.00 499.10,303.00 492.50,296.40 492.50,282.20" fill="none" stroke="#cdcdcd" stroke-width="1.25"/><polygon points="204.50,187.30 210.50,187.30 214.20,191.00 214.20,197.00 210.50,200.70 204.50,200.70 200.80,197.00 200.80,191.00" fill="#3b3b3b" stroke="#50b574" stroke-width="3.9"/><rect x="204.30" y="190.80" width="6.4" height="6.4" fill="#c6c6c6"/><path d="M202.90 194.00h9.2M207.50 189.40v9.2" stroke="#aaa" stroke-width="0.5"/><polygon points="204.50,214.90 210.50,214.90 214.20,218.60 214.20,224.60 210.50,228.30 204.50,228.30 200.80,224.60 200.80,218.60" fill="#3b3b3b" stroke="#50b574" stroke-width="3.9"/><rect x="204.30" y="218.40" width="6.4" height="6.4" fill="#c6c6c6"/><path d="M202.90 221.60h9.2M207.50 217.00v9.2" stroke="#aaa" stroke-width="0.5"/><polygon points="422.30,173.60 428.30,173.60 432.00,177.30 432.00,183.30 428.30,187.00 422.30,187.00 418.60,183.30 418.60,177.30" fill="#3b3b3b" stroke="#50b574" stroke-width="3.9"/><rect x="422.10" y="177.10" width="6.4" height="6.4" fill="#c6c6c6"/><path d="M420.70 180.30h9.2M425.30 175.70v9.2" stroke="#aaa" stroke-width="0.5"/><polygon points="422.30,200.80 428.30,200.80 432.00,204.50 432.00,210.50 428.30,214.20 422.30,214.20 418.60,210.50 418.60,204.50" fill="#3b3b3b" stroke="#50b574" stroke-width="3.9"/><rect x="422.10" y="204.30" width="6.4" height="6.4" fill="#c6c6c6"/><path d="M420.70 207.50h9.2M425.30 202.90v9.2" stroke="#aaa" stroke-width="0.5"/><polygon points="422.30,228.00 428.30,228.00 432.00,231.70 432.00,237.70 428.30,241.40 422.30,241.40 418.60,237.70 418.60,231.70" fill="#3b3b3b" stroke="#50b574" stroke-width="3.9"/><rect x="422.10" y="231.50" width="6.4" height="6.4" fill="#c6c6c6"/><path d="M420.70 234.70h9.2M425.30 230.10v9.2" stroke="#aaa" stroke-width="0.5"/><polygon points="476.00,173.60 482.00,173.60 485.70,177.30 485.70,183.30 482.00,187.00 476.00,187.00 472.30,183.30 472.30,177.30" fill="#3b3b3b" stroke="#50b574" stroke-width="3.9"/><rect x="475.80" y="177.10" width="6.4" height="6.4" fill="#c6c6c6"/><path d="M474.40 180.30h9.2M479.00 175.70v9.2" stroke="#aaa" stroke-width="0.5"/><polygon points="476.00,200.80 482.00,200.80 485.70,204.50 485.70,210.50 482.00,214.20 476.00,214.20 472.30,210.50 472.30,204.50" fill="#3b3b3b" stroke="#50b574" stroke-width="3.9"/><rect x="475.80" y="204.30" width="6.4" height="6.4" fill="#c6c6c6"/><path d="M474.40 207.50h9.2M479.00 202.90v9.2" stroke="#aaa" stroke-width="0.5"/><polygon points="476.00,228.00 482.00,228.00 485.70,231.70 485.70,237.70 482.00,241.40 476.00,241.40 472.30,237.70 472.30,231.70" fill="#3b3b3b" stroke="#50b574" stroke-width="3.9"/><rect x="475.80" y="231.50" width="6.4" height="6.4" fill="#c6c6c6"/><path d="M474.40 234.70h9.2M479.00 230.10v9.2" stroke="#aaa" stroke-width="0.5"/><polygon points="530.20,173.60 536.20,173.60 539.90,177.30 539.90,183.30 536.20,187.00 530.20,187.00 526.50,183.30 526.50,177.30" fill="#3b3b3b" stroke="#50b574" stroke-width="3.9"/><rect x="530.00" y="177.10" width="6.4" height="6.4" fill="#c6c6c6"/><path d="M528.60 180.30h9.2M533.20 175.70v9.2" stroke="#aaa" stroke-width="0.5"/><polygon points="530.20,200.80 536.20,200.80 539.90,204.50 539.90,210.50 536.20,214.20 530.20,214.20 526.50,210.50 526.50,204.50" fill="#3b3b3b" stroke="#50b574" stroke-width="3.9"/><rect x="530.00" y="204.30" width="6.4" height="6.4" fill="#c6c6c6"/><path d="M528.60 207.50h9.2M533.20 202.90v9.2" stroke="#aaa" stroke-width="0.5"/><polygon points="530.20,228.00 536.20,228.00 539.90,231.70 539.90,237.70 536.20,241.40 530.20,241.40 526.50,237.70 526.50,231.70" fill="#3b3b3b" stroke="#50b574" stroke-width="3.9"/><rect x="530.00" y="231.50" width="6.4" height="6.4" fill="#c6c6c6"/><path d="M528.60 234.70h9.2M533.20 230.10v9.2" stroke="#aaa" stroke-width="0.5"/><polygon points="422.20,282.60 428.20,282.60 431.90,286.30 431.90,292.30 428.20,296.00 422.20,296.00 418.50,292.30 418.50,286.30" fill="#3b3b3b" stroke="#50b574" stroke-width="3.9"/><rect x="422.00" y="286.10" width="6.4" height="6.4" fill="#c6c6c6"/><path d="M420.60 289.30h9.2M425.20 284.70v9.2" stroke="#aaa" stroke-width="0.5"/><polygon points="449.00,282.60 455.00,282.60 458.70,286.30 458.70,292.30 455.00,296.00 449.00,296.00 445.30,292.30 445.30,286.30" fill="#3b3b3b" stroke="#50b574" stroke-width="3.9"/><rect x="448.80" y="286.10" width="6.4" height="6.4" fill="#c6c6c6"/><path d="M447.40 289.30h9.2M452.00 284.70v9.2" stroke="#aaa" stroke-width="0.5"/><polygon points="475.80,282.60 481.80,282.60 485.50,286.30 485.50,292.30 481.80,296.00 475.80,296.00 472.10,292.30 472.10,286.30" fill="#3b3b3b" stroke="#50b574" stroke-width="3.9"/><rect x="475.60" y="286.10" width="6.4" height="6.4" fill="#c6c6c6"/><path d="M474.20 289.30h9.2M478.80 284.70v9.2" stroke="#aaa" stroke-width="0.5"/><polygon points="503.20,282.60 509.20,282.60 512.90,286.30 512.90,292.30 509.20,296.00 503.20,296.00 499.50,292.30 499.50,286.30" fill="#3b3b3b" stroke="#50b574" stroke-width="3.9"/><rect x="503.00" y="286.10" width="6.4" height="6.4" fill="#c6c6c6"/><path d="M501.60 289.30h9.2M506.20 284.70v9.2" stroke="#aaa" stroke-width="0.5"/><circle cx="272.5" cy="180.3" r="5.95" fill="#3b3b3b" stroke="#50b574" stroke-width="3.8"/><text x="272.5" y="181.9" font-size="4.5" fill="#6a6a6a" text-anchor="middle" font-family="Liberation Sans">1</text><circle cx="272.5" cy="207.5" r="5.95" fill="#3b3b3b" stroke="#50b574" stroke-width="3.8"/><text x="272.5" y="209.1" font-size="4.5" fill="#6a6a6a" text-anchor="middle" font-family="Liberation Sans">2</text><circle cx="272.5" cy="234.6" r="5.95" fill="#3b3b3b" stroke="#50b574" stroke-width="3.8"/><text x="272.5" y="236.2" font-size="4.5" fill="#6a6a6a" text-anchor="middle" font-family="Liberation Sans">3</text><circle cx="272.5" cy="261.5" r="5.95" fill="#3b3b3b" stroke="#50b574" stroke-width="3.8"/><text x="272.5" y="263.1" font-size="4.5" fill="#6a6a6a" text-anchor="middle" font-family="Liberation Sans">4</text><circle cx="360.4" cy="261.5" r="5.95" fill="#3b3b3b" stroke="#50b574" stroke-width="3.8"/><text x="360.4" y="263.1" font-size="4.5" fill="#6a6a6a" text-anchor="middle" font-family="Liberation Sans">5</text><circle cx="360.4" cy="234.6" r="5.95" fill="#3b3b3b" stroke="#50b574" stroke-width="3.8"/><text x="360.4" y="236.2" font-size="4.5" fill="#6a6a6a" text-anchor="middle" font-family="Liberation Sans">6</text><circle cx="360.4" cy="207.5" r="5.95" fill="#3b3b3b" stroke="#50b574" stroke-width="3.8"/><text x="360.4" y="209.1" font-size="4.5" fill="#6a6a6a" text-anchor="middle" font-family="Liberation Sans">7</text><circle cx="360.4" cy="180.3" r="5.95" fill="#3b3b3b" stroke="#50b574" stroke-width="3.8"/><text x="360.4" y="181.9" font-size="4.5" fill="#6a6a6a" text-anchor="middle" font-family="Liberation Sans">8</text><line x1="207.5" y1="194.0" x2="360.4" y2="180.3" stroke="#a9a9a9" stroke-width="0.8"/><line x1="207.5" y1="221.6" x2="272.5" y2="261.5" stroke="#a9a9a9" stroke-width="0.8"/><line x1="360.4" y1="180.3" x2="425.3" y2="207.5" stroke="#a9a9a9" stroke-width="0.8"/><line x1="272.5" y1="261.5" x2="425.3" y2="234.7" stroke="#a9a9a9" stroke-width="0.8"/><line x1="425.3" y1="207.5" x2="533.2" y2="207.5" stroke="#a9a9a9" stroke-width="0.8"/><line x1="425.3" y1="234.7" x2="533.2" y2="234.7" stroke="#a9a9a9" stroke-width="0.8"/><line x1="479.0" y1="234.7" x2="478.8" y2="289.3" stroke="#a9a9a9" stroke-width="0.8"/><line x1="533.2" y1="207.5" x2="506.2" y2="289.3" stroke="#a9a9a9" stroke-width="0.8"/><rect x="281.3" y="166.7" width="71.3" height="108.6" fill="none" stroke="#d4d4d4" stroke-width="1.2"/><path d="M306 221.5h22M316.9 210.5v22" stroke="#9a9a9a" stroke-width="0.7"/><circle cx="259.7" cy="180.3" r="2.6" fill="#cfcfcf"/><text x="299.60" y="160.20" font-size="18" letter-spacing="0.6" fill="#bdbdbd" font-family="Liberation Sans">E$1</text><text x="193.20" y="174.40" font-size="18" letter-spacing="0.6" fill="#bdbdbd" font-family="Liberation Sans">E$11</text><path d="M187.70 174.40h11M193.20 168.90v11" stroke="#8a8a8a" stroke-width="0.6"/><text x="193.20" y="202.00" font-size="18" letter-spacing="0.6" fill="#bdbdbd" font-family="Liberation Sans">E$12</text><path d="M187.70 202.00h11M193.20 196.50v11" stroke="#8a8a8a" stroke-width="0.6"/><text x="411.00" y="160.70" font-size="18" letter-spacing="0.6" fill="#bdbdbd" font-family="Liberation Sans">E$2</text><path d="M405.50 160.70h11M411.00 155.20v11" stroke="#8a8a8a" stroke-width="0.6"/><text x="411.00" y="187.90" font-size="18" letter-spacing="0.6" fill="#bdbdbd" font-family="Liberation Sans">E$3</text><path d="M405.50 187.90h11M411.00 182.40v11" stroke="#8a8a8a" stroke-width="0.6"/><text x="411.00" y="215.10" font-size="18" letter-spacing="0.6" fill="#bdbdbd" font-family="Liberation Sans">E$4</text><path d="M405.50 215.10h11M411.00 209.60v11" stroke="#8a8a8a" stroke-width="0.6"/><text x="464.70" y="160.70" font-size="18" letter-spacing="0.6" fill="#bdbdbd" font-family="Liberation Sans">E$5</text><path d="M459.20 160.70h11M464.70 155.20v11" stroke="#8a8a8a" stroke-width="0.6"/><text x="464.70" y="187.90" font-size="18" letter-spacing="0.6" fill="#bdbdbd" font-family="Liberation Sans">E$6</text><path d="M459.20 187.90h11M464.70 182.40v11" stroke="#8a8a8a" stroke-width="0.6"/><text x="464.70" y="215.10" font-size="18" letter-spacing="0.6" fill="#bdbdbd" font-family="Liberation Sans">E$7</text><path d="M459.20 215.10h11M464.70 209.60v11" stroke="#8a8a8a" stroke-width="0.6"/><text x="518.90" y="160.70" font-size="18" letter-spacing="0.6" fill="#bdbdbd" font-family="Liberation Sans">E$8</text><path d="M513.40 160.70h11M518.90 155.20v11" stroke="#8a8a8a" stroke-width="0.6"/><text x="518.90" y="187.90" font-size="18" letter-spacing="0.6" fill="#bdbdbd" font-family="Liberation Sans">E$9</text><path d="M513.40 187.90h11M518.90 182.40v11" stroke="#8a8a8a" stroke-width="0.6"/><text x="518.90" y="215.10" font-size="18" letter-spacing="0.6" fill="#bdbdbd" font-family="Liberation Sans">E$10</text><path d="M513.40 215.10h11M518.90 209.60v11" stroke="#8a8a8a" stroke-width="0.6"/><text x="410.90" y="269.70" font-size="18" letter-spacing="0.6" fill="#bdbdbd" font-family="Liberation Sans">E$13</text><path d="M405.40 269.70h11M410.90 264.20v11" stroke="#8a8a8a" stroke-width="0.6"/><text x="437.70" y="269.70" font-size="18" letter-spacing="0.6" fill="#bdbdbd" font-family="Liberation Sans">E$14</text><path d="M432.20 269.70h11M437.70 264.20v11" stroke="#8a8a8a" stroke-width="0.6"/><text x="464.50" y="269.70" font-size="18" letter-spacing="0.6" fill="#bdbdbd" font-family="Liberation Sans">E$15</text><path d="M459.00 269.70h11M464.50 264.20v11" stroke="#8a8a8a" stroke-width="0.6"/><text x="491.90" y="269.70" font-size="18" letter-spacing="0.6" fill="#bdbdbd" font-family="Liberation Sans">E$16</text><path d="M486.40 269.70h11M491.90 264.20v11" stroke="#8a8a8a" stroke-width="0.6"/></g><path d="M167.2 84.5V430.5H627" fill="none" stroke="#2c2c2c" stroke-width="1"/></svg>
<div class="a" style="left:627px;top:84.5px;width:6px;height:352.5px;background:#e9e9e9;"></div>
<div class="a" style="left:628.7px;top:280px;width:3px;height:93.5px;background:#c2c2c2;"></div>
<div class="a" style="left:167px;top:431px;width:460px;height:6px;background:#e9e9e9;"></div>
<div class="a" style="left:229px;top:433px;width:108px;height:2.2px;background:#8f8f8f;"></div>
<div class="a" style="left:627px;top:431px;width:6px;height:6px;background:#d6d6d6;"></div>
<div class="a" style="left:333.5px;top:419px;width:132.5px;height:10px;background:#f7f7f7;"></div>
<svg class="a" style="left:0;top:0" width="800" height="450" viewBox="0 0 800 450"><circle cx="338.3" cy="424" r="2.8" fill="#6aaae2"/><rect x="337.9" y="422.8" width="0.8" height="2.6" fill="#fff"/><ellipse cx="349.2" cy="424" rx="3.3" ry="2.3" fill="#333"/><circle cx="349.2" cy="424" r="1" fill="#999"/><path d="M358 422l-1.5 1.5 1.5 1.5M356.8 423.5h2.5a2 2 0 0 1 2 2v0.8" fill="none" stroke="#444" stroke-width="0.9"/><path d="M372.5 422l1.5 1.5-1.5 1.5M373.7 423.5h-2.5a2 2 0 0 0-2 2v0.8" fill="none" stroke="#aaa" stroke-width="0.9"/><circle cx="380.8" cy="423.2" r="2" fill="none" stroke="#999" stroke-width="0.7"/><path d="M382.20000000000005 424.6l1.8 1.8" stroke="#2e2e2e" stroke-width="0.9"/><circle cx="391.8" cy="423.2" r="2" fill="none" stroke="#999" stroke-width="0.7"/><path d="M393.20000000000005 424.6l1.8 1.8" stroke="#2e2e2e" stroke-width="0.9"/><circle cx="403.2" cy="423.2" r="2" fill="none" stroke="#7a9cc8" stroke-width="0.7"/><path d="M404.6 424.6l1.8 1.8" stroke="#2e2e2e" stroke-width="0.9"/><path d="M411.5 421.5h5v5h-5zM411.5 423.2h5M411.5 424.9h5" fill="none" stroke="#bbb" stroke-width="0.6"/><path d="M423 424h5M425.4 421.5v5" stroke="#aaa" stroke-width="0.6"/><circle cx="435.9" cy="424" r="3.3" fill="#d82b2b"/><rect x="434.2" y="423.5" width="3.4" height="1" fill="#fff"/><rect x="443.5" y="421.5" width="4" height="4" fill="none" stroke="#aaa" stroke-width="0.6" stroke-dasharray="0.8 0.5"/><path d="M447.5 424v3l0.7-0.7" fill="none" stroke="#444" stroke-width="0.7"/><path d="M455.5 421.5v5.5M455.5 422h4l1 1.5h-5" fill="none" stroke="#aaa" stroke-width="0.7"/><path d="M461.8 423.3h1.8l-0.9 1.2z" fill="#333"/></svg>
<div class="a" style="left:506.7px;top:70px;width:124.6px;height:42.6px;background:#f0f0f0;border-left:0.7px solid #d8d8d8;border-bottom:0.7px solid #d0d0d0"></div>
<svg class="a" style="left:507.5px;top:74px" width="8" height="6" viewBox="0 0 8 6"><path d="M0.8 0.5v5" stroke="#aaa" stroke-width="0.6" stroke-dasharray="0.6 0.6"/><circle cx="6" cy="3" r="1.7" fill="#333"/></svg>
<svg class="a" style="left:625px;top:75.5px" width="5" height="3" viewBox="0 0 5 3"><path d="M0 0l2 1.5L0 3zM2.5 0l2 1.5-2 1.5z" fill="#333"/></svg>
<div class="a" style="left:507.4px;top:82.2px;width:123.9px;height:0.6px;background:#dedede;"></div>
<div class="a" style="left:536.8px;top:87.3px;width:32.4px;height:8.7px;background:#fff;border:0.7px solid #cfcfcf"></div>
<svg class="a" style="left:565px;top:91px" width="2.4" height="1.6" viewBox="0 0 2.4 1.6"><path d="M0 0h2.4l-1.2 1.6z" fill="#2e2e2e"/></svg>
<div class="a" style="left:507.4px;top:97.2px;width:123.9px;height:0.6px;background:#e2e2e2;"></div>
<div class="a" style="left:572.3px;top:101px;width:25.5px;height:7.9px;background:#e8e8e8;border:0.7px solid #d6d6d6"></div>
<div class="a" style="left:601.5px;top:101px;width:25px;height:7.9px;background:#e8e8e8;border:0.7px solid #d6d6d6"></div>
<div class="a" style="left:633px;top:70px;width:167px;height:367px;background:#f0f0f0;"></div>
<div class="a" style="left:632.3px;top:70px;width:0.8px;height:367px;background:#d9d9d9;"></div>
<svg class="a" style="left:634px;top:72.5px" width="8" height="6" viewBox="0 0 8 6"><path d="M0.8 0.5v5" stroke="#aaa" stroke-width="0.6" stroke-dasharray="0.6 0.6"/><circle cx="6.2" cy="2.8" r="1.7" fill="#333"/></svg>
<svg class="a" style="left:793.5px;top:73.8px" width="5" height="3" viewBox="0 0 5 3"><path d="M0 0l2 1.5L0 3zM2.5 0l2 1.5-2 1.5z" fill="#333"/></svg>
<div class="a" style="left:634.2px;top:93px;width:10px;height:10px;background:#1f8bd3;"></div>
<svg class="a" style="left:637.6px;top:96.8px" width="3.4" height="2.4" viewBox="0 0 3.4 2.4"><path d="M0 0h3.4l-1.7 2.4z" fill="#111"/></svg>
<svg class="a" style="left:634px;top:256.5px" width="8" height="6" viewBox="0 0 8 6"><path d="M0.8 0.5v5" stroke="#aaa" stroke-width="0.6" stroke-dasharray="0.6 0.6"/><circle cx="6.2" cy="2.8" r="1.7" fill="#222"/></svg>
<div class="a" style="left:633.5px;top:263.3px;width:165.3px;height:71px;background:#f7f7f7;border-top:0.7px solid #cfcfcf"></div>
<div class="a" style="left:634.3px;top:272px;width:158.1px;height:62px;background:#0f8fd6;"></div>
<div class="a" style="left:792.4px;top:272px;width:6.4px;height:62px;background:#fbfbfb;"></div>
<div class="a" style="left:794.7px;top:272.5px;width:2.6px;height:28.5px;background:#9a9a9a;"></div>
<svg class="a" style="left:0;top:0" width="800" height="450" viewBox="0 0 800 450"><circle cx="638.6" cy="293.7" r="2.6" fill="#d6e2ee"/><path d="M635.8 301h5.6M635.8 303h5.6" stroke="#9aa7b3" stroke-width="0.8"/><rect x="635.8" y="307.5" width="5.6" height="5.4" fill="#1368b8" stroke="#0b3e7a" stroke-width="0.5"/><rect x="635.9" y="316" width="5.4" height="5.2" fill="none" stroke="#6fa6d6" stroke-width="0.7"/><rect x="635.8" y="323.8" width="5.6" height="5.6" fill="#c9d8e6"/><path d="M638.6 323.8v5.6" stroke="#0f8fd6" stroke-width="0.7"/><rect x="635.8" y="332.2" width="5.6" height="2" fill="#dfe8f0"/><circle cx="0" cy="0" r="0"/></svg>
<div class="a" style="left:633.5px;top:334px;width:165.3px;height:11.6px;background:#f1f1f1;"></div>
<div class="a" style="left:633.3px;top:345.6px;width:166.7px;height:33.3px;background:#fff;border:0.7px solid #d0d0d0"></div>
<div class="a" style="left:633.3px;top:379.6px;width:166.7px;height:57.4px;background:#fafafa;border:0.7px solid #d6d6d6"></div>
<div class="a" style="left:634px;top:380.7px;width:158.4px;height:43.7px;background:#0f8fd6;"></div>
<div class="a" style="left:794.7px;top:381.5px;width:2.6px;height:13.5px;background:#9a9a9a;"></div>
<div class="a" style="left:635.6px;top:382.20000000000005px;width:6px;height:5.8px;background:#b8406a;"></div>
<div class="a" style="left:635.6px;top:390.6px;width:6px;height:5.8px;background:#1c73c6;"></div>
<div class="a" style="left:635.6px;top:398.90000000000003px;width:6px;height:5.8px;background:#4fa07c;"></div>
<div class="a" style="left:635.6px;top:407.1px;width:6px;height:5.8px;background:#58a38c;"></div>
<div class="a" style="left:635.6px;top:415.5px;width:6px;height:5.8px;background:#94acc8;"></div>
<div class="a" style="left:779px;top:427px;width:21px;height:10px;background:#fbfbfb;border:0.7px solid #cfcfcf"></div>
<div class="a" style="left:350px;top:0px;width:100px;height:1px;background:#a8a8a8;"></div>
<div class="a" style="left:370px;top:0px;width:80px;height:1px;background:#8e8e8e;"></div>
<div class="t" style="left:9.6px;top:3.00px;font-size:5.4px;color:#222;font-weight:normal;font-family:'Liberation Sans';transform:scaleX(0.899);">Autodesk Fusion 360 (Expired Subscription - Read Only)</div>
<div class="t" style="left:670px;top:14.00px;font-size:5.4px;color:#fff7ea;font-weight:normal;font-family:'Liberation Sans';transform:scaleX(0.834);">Expired: Subscribe Now</div>
<div class="t" style="left:159px;top:15.00px;font-size:5.6px;color:#7a7a7a;font-weight:normal;font-family:'Liberation Sans';transform:scaleX(1.073);">Untitled*</div>
<div class="t" style="left:350.3px;top:15.00px;font-size:5.6px;color:#7a7a7a;font-weight:normal;font-family:'Liberation Sans';transform:scaleX(0.940);">Untitled*(1)</div>
<div class="t" style="left:545.6px;top:15.00px;font-size:5.6px;color:#555;font-weight:normal;font-family:'Liberation Sans';transform:scaleX(0.926);">Untitled*</div>
<div class="t" style="left:787.3px;top:15.00px;font-size:4.6px;color:#777;font-weight:normal;font-family:'Liberation Sans';transform:scaleX(0.813);">OE</div>
<div class="t" style="left:17.2px;top:25.00px;font-size:5.6px;color:#2b86c5;font-weight:normal;font-family:'Liberation Sans';transform:scaleX(0.732);">DESIGN</div>
<div class="t" style="left:51.7px;top:25.00px;font-size:5.6px;color:#555;font-weight:normal;font-family:'Liberation Sans';transform:scaleX(0.730);">DOCUMENT</div>
<div class="t" style="left:94.6px;top:25.00px;font-size:5.6px;color:#555;font-weight:normal;font-family:'Liberation Sans';transform:scaleX(0.726);">RULES DRC/ERC</div>
<div class="t" style="left:147.9px;top:25.00px;font-size:5.6px;color:#555;font-weight:normal;font-family:'Liberation Sans';transform:scaleX(0.738);">MANUFACTURING</div>
<div class="t" style="left:203.6px;top:25.00px;font-size:5.6px;color:#555;font-weight:normal;font-family:'Liberation Sans';transform:scaleX(0.750);">AUTOMATION</div>
<div class="t" style="left:250.5px;top:25.00px;font-size:5.6px;color:#555;font-weight:normal;font-family:'Liberation Sans';transform:scaleX(0.784);">LIBRARY</div>
<div class="t" style="left:7.9px;top:51.00px;font-size:5.4px;color:#666;font-weight:normal;font-family:'Liberation Sans';transform:scaleX(0.738);">SWITCH</div>
<div class="t" style="left:45.2px;top:51.00px;font-size:5.4px;color:#666;font-weight:normal;font-family:'Liberation Sans';transform:scaleX(0.762);">VIEW</div>
<div class="t" style="left:87.2px;top:51.00px;font-size:5.4px;color:#666;font-weight:normal;font-family:'Liberation Sans';transform:scaleX(0.717);">EDIT</div>
<div class="t" style="left:141.9px;top:51.00px;font-size:5.4px;color:#666;font-weight:normal;font-family:'Liberation Sans';transform:scaleX(0.790);">LAYERS</div>
<div class="t" style="left:188.1px;top:51.00px;font-size:5.4px;color:#666;font-weight:normal;font-family:'Liberation Sans';transform:scaleX(0.793);">BOARD SHAPE</div>
<div class="t" style="left:256.4px;top:51.00px;font-size:5.4px;color:#666;font-weight:normal;font-family:'Liberation Sans';transform:scaleX(0.825);">PLACE</div>
<div class="t" style="left:323.4px;top:51.00px;font-size:5.4px;color:#666;font-weight:normal;font-family:'Liberation Sans';transform:scaleX(0.721);">ROUTE</div>
<div class="t" style="left:371.2px;top:51.00px;font-size:5.4px;color:#666;font-weight:normal;font-family:'Liberation Sans';transform:scaleX(0.800);">FANOUT</div>
<div class="t" style="left:424.2px;top:51.00px;font-size:5.4px;color:#666;font-weight:normal;font-family:'Liberation Sans';transform:scaleX(0.748);">QUICK ROUTE</div>
<div class="t" style="left:485px;top:51.00px;font-size:5.4px;color:#666;font-weight:normal;font-family:'Liberation Sans';transform:scaleX(0.800);">POLYGON</div>
<div class="t" style="left:522px;top:51.00px;font-size:5.4px;color:#666;font-weight:normal;font-family:'Liberation Sans';transform:scaleX(0.728);">RIPUP</div>
<div class="t" style="left:569px;top:51.00px;font-size:5.4px;color:#666;font-weight:normal;font-family:'Liberation Sans';transform:scaleX(0.791);">REWORK</div>
<div class="t" style="left:625px;top:51.00px;font-size:5.4px;color:#666;font-weight:normal;font-family:'Liberation Sans';transform:scaleX(0.811);">MODIFY</div>
<div class="t" style="left:655.6px;top:51.00px;font-size:5.4px;color:#666;font-weight:normal;font-family:'Liberation Sans';transform:scaleX(0.748);">SELECT</div>
<div class="t" style="left:332px;top:61.00px;font-size:6.4px;color:#2a2a2a;font-weight:bold;font-family:'Liberation Sans';transform:scaleX(0.851);">The 2D and 3D PCB documents are out of sync.</div>
<div class="t" style="left:10px;top:73.00px;font-size:5.0px;color:#8a8a8a;font-weight:normal;font-family:'Liberation Sans';transform:scaleX(0.851);-webkit-text-stroke:0">DESIGN MANAGER</div>
<div class="t" style="left:6px;top:83.00px;font-size:6.2px;color:#4aa3dd;font-weight:normal;font-family:'Liberation Sans';transform:scaleX(0.793);-webkit-text-stroke:0">Browser</div>
<div class="t" style="left:37px;top:83.00px;font-size:6.2px;color:#2e2e2e;font-weight:normal;font-family:'Liberation Sans';transform:scaleX(0.800);">Filter</div>
<div class="t" style="left:4px;top:99.00px;font-size:6.2px;color:#2e2e2e;font-weight:normal;font-family:'Liberation Sans';transform:scaleX(0.826);">View</div>
<div class="t" style="left:27px;top:100.00px;font-size:6.4px;color:#2a2a2a;font-weight:normal;font-family:'Liberation Sans';transform:scaleX(0.770);">Devices</div>
<div class="t" style="left:4px;top:114.00px;font-size:6.2px;color:#2e2e2e;font-weight:normal;font-family:'Liberation Sans';transform:scaleX(0.788);">Device Sets</div>
<div class="t" style="left:103px;top:114.00px;font-size:6.2px;color:#2e2e2e;font-weight:normal;font-family:'Liberation Sans';transform:scaleX(0.868);">3 of 3 shown (1 selected)</div>
<div class="t" style="left:17px;top:125.00px;font-size:6.2px;color:#9a9a9a;font-weight:normal;font-family:'Liberation Sans';transform:scaleX(0.765);">Search</div>
<div class="t" style="left:70.9px;top:139.00px;font-size:6.4px;color:#333;font-weight:normal;font-family:'Liberation Sans';transform:scaleX(0.802);">Device Set</div>
<div class="t" style="left:5.5px;top:146.00px;font-size:6.2px;color:#fff;font-weight:normal;font-family:'Liberation Sans';transform:scaleX(0.806);">&lt;All Devices&gt;</div>
<div class="t" style="left:5.5px;top:153.00px;font-size:6.2px;color:#2e2e2e;font-weight:normal;font-family:'Liberation Sans';transform:scaleX(0.835);">&lt;Bottom Side Devices&gt;</div>
<div class="t" style="left:5.5px;top:159.00px;font-size:6.2px;color:#2e2e2e;font-weight:normal;font-family:'Liberation Sans';transform:scaleX(0.836);">&lt;Top Side Devices&gt;</div>
<div class="t" style="left:4px;top:224.00px;font-size:6.2px;color:#2e2e2e;font-weight:normal;font-family:'Liberation Sans';transform:scaleX(0.772);">Devices</div>
<div class="t" style="left:97.4px;top:224.00px;font-size:6.2px;color:#2e2e2e;font-weight:normal;font-family:'Liberation Sans';transform:scaleX(0.863);">16 of 16 shown (0 selected)</div>
<div class="t" style="left:17px;top:234.00px;font-size:6.2px;color:#9a9a9a;font-weight:normal;font-family:'Liberation Sans';transform:scaleX(0.765);">Search</div>
<div class="t" style="left:6px;top:247.00px;font-size:6.2px;color:#2e2e2e;font-weight:normal;font-family:'Liberation Sans';transform:scaleX(0.787);">Name</div>
<div class="t" style="left:27px;top:247.00px;font-size:6.2px;color:#2e2e2e;font-weight:normal;font-family:'Liberation Sans';transform:scaleX(0.860);">Footprint</div>
<div class="t" style="left:56px;top:247.00px;font-size:6.2px;color:#2e2e2e;font-weight:normal;font-family:'Liberation Sans';transform:scaleX(0.780);">Value</div>
<div class="t" style="left:74px;top:247.00px;font-size:6.2px;color:#2e2e2e;font-weight:normal;font-family:'Liberation Sans';transform:scaleX(0.807);">Side</div>
<div class="t" style="left:90px;top:247.00px;font-size:6.2px;color:#2e2e2e;font-weight:normal;font-family:'Liberation Sans';transform:scaleX(0.747);">Pins</div>
<div class="t" style="left:105px;top:247.00px;font-size:6.2px;color:#2e2e2e;font-weight:normal;font-family:'Liberation Sans';transform:scaleX(0.802);">Locked</div>
<div class="t" style="left:126px;top:247.00px;font-size:6.2px;color:#2e2e2e;font-weight:normal;font-family:'Liberation Sans';transform:scaleX(0.842);">Pos. (mil)</div>
<div class="t" style="left:153px;top:247.00px;font-size:6.2px;color:#2e2e2e;font-weight:normal;font-family:'Liberation Sans';transform:scaleX(0.725);">A</div>
<div class="t" style="left:5.5px;top:255.00px;font-size:6.2px;color:#2e2e2e;font-weight:normal;font-family:'Liberation Sans';transform:scaleX(0.953);">E$1</div>
<div class="t" style="left:22.7px;top:255.00px;font-size:6.2px;color:#2e2e2e;font-weight:normal;font-family:'Liberation Sans';transform:scaleX(0.795);">P(R-PDIP-T8)</div>
<div class="t" style="left:74px;top:255.00px;font-size:6.2px;color:#2e2e2e;font-weight:normal;font-family:'Liberation Sans';transform:scaleX(0.793);">TOP</div>
<div class="t" style="left:98.3px;top:255.00px;font-size:6.2px;color:#2e2e2e;font-weight:normal;font-family:'Liberation Sans';transform:scaleX(0.666);">8</div>
<div class="t" style="left:126px;top:255.00px;font-size:6.2px;color:#2e2e2e;font-weight:normal;font-family:'Liberation Sans';transform:scaleX(0.868);">(900 950)</div>
<div class="t" style="left:5.5px;top:261.00px;font-size:6.2px;color:#2e2e2e;font-weight:normal;font-family:'Liberation Sans';transform:scaleX(0.953);">E$2</div>
<div class="t" style="left:22.7px;top:261.00px;font-size:6.2px;color:#2e2e2e;font-weight:normal;font-family:'Liberation Sans';transform:scaleX(0.782);">1X01</div>
<div class="t" style="left:74px;top:261.00px;font-size:6.2px;color:#2e2e2e;font-weight:normal;font-family:'Liberation Sans';transform:scaleX(0.793);">TOP</div>
<div class="t" style="left:98.3px;top:261.00px;font-size:6.2px;color:#2e2e2e;font-weight:normal;font-family:'Liberation Sans';transform:scaleX(0.666);">1</div>
<div class="t" style="left:126px;top:261.00px;font-size:6.2px;color:#2e2e2e;font-weight:normal;font-family:'Liberation Sans';transform:scaleX(0.918);">(1300 1...</div>
<div class="t" style="left:5.5px;top:268.00px;font-size:6.2px;color:#2e2e2e;font-weight:normal;font-family:'Liberation Sans';transform:scaleX(0.953);">E$3</div>
<div class="t" style="left:22.7px;top:268.00px;font-size:6.2px;color:#2e2e2e;font-weight:normal;font-family:'Liberation Sans';transform:scaleX(0.782);">1X01</div>
<div class="t" style="left:74px;top:268.00px;font-size:6.2px;color:#2e2e2e;font-weight:normal;font-family:'Liberation Sans';transform:scaleX(0.793);">TOP</div>
<div class="t" style="left:98.3px;top:268.00px;font-size:6.2px;color:#2e2e2e;font-weight:normal;font-family:'Liberation Sans';transform:scaleX(0.666);">1</div>
<div class="t" style="left:126px;top:268.00px;font-size:6.2px;color:#2e2e2e;font-weight:normal;font-family:'Liberation Sans';transform:scaleX(0.918);">(1300 1...</div>
<div class="t" style="left:5.5px;top:275.00px;font-size:6.2px;color:#2e2e2e;font-weight:normal;font-family:'Liberation Sans';transform:scaleX(0.953);">E$4</div>
<div class="t" style="left:22.7px;top:275.00px;font-size:6.2px;color:#2e2e2e;font-weight:normal;font-family:'Liberation Sans';transform:scaleX(0.782);">1X01</div>
<div class="t" style="left:74px;top:275.00px;font-size:6.2px;color:#2e2e2e;font-weight:normal;font-family:'Liberation Sans';transform:scaleX(0.793);">TOP</div>
<div class="t" style="left:98.3px;top:275.00px;font-size:6.2px;color:#2e2e2e;font-weight:normal;font-family:'Liberation Sans';transform:scaleX(0.666);">1</div>
<div class="t" style="left:126px;top:275.00px;font-size:6.2px;color:#2e2e2e;font-weight:normal;font-family:'Liberation Sans';transform:scaleX(0.918);">(1300 9...</div>
<div class="t" style="left:5.5px;top:281.00px;font-size:6.2px;color:#2e2e2e;font-weight:normal;font-family:'Liberation Sans';transform:scaleX(0.953);">E$5</div>
<div class="t" style="left:22.7px;top:281.00px;font-size:6.2px;color:#2e2e2e;font-weight:normal;font-family:'Liberation Sans';transform:scaleX(0.782);">1X01</div>
<div class="t" style="left:74px;top:281.00px;font-size:6.2px;color:#2e2e2e;font-weight:normal;font-family:'Liberation Sans';transform:scaleX(0.793);">TOP</div>
<div class="t" style="left:98.3px;top:281.00px;font-size:6.2px;color:#2e2e2e;font-weight:normal;font-family:'Liberation Sans';transform:scaleX(0.666);">1</div>
<div class="t" style="left:126px;top:281.00px;font-size:6.2px;color:#2e2e2e;font-weight:normal;font-family:'Liberation Sans';transform:scaleX(0.918);">(1500 1...</div>
<div class="t" style="left:5.5px;top:288.00px;font-size:6.2px;color:#2e2e2e;font-weight:normal;font-family:'Liberation Sans';transform:scaleX(0.953);">E$6</div>
<div class="t" style="left:22.7px;top:288.00px;font-size:6.2px;color:#2e2e2e;font-weight:normal;font-family:'Liberation Sans';transform:scaleX(0.782);">1X01</div>
<div class="t" style="left:74px;top:288.00px;font-size:6.2px;color:#2e2e2e;font-weight:normal;font-family:'Liberation Sans';transform:scaleX(0.793);">TOP</div>
<div class="t" style="left:98.3px;top:288.00px;font-size:6.2px;color:#2e2e2e;font-weight:normal;font-family:'Liberation Sans';transform:scaleX(0.666);">1</div>
<div class="t" style="left:126px;top:288.00px;font-size:6.2px;color:#2e2e2e;font-weight:normal;font-family:'Liberation Sans';transform:scaleX(0.918);">(1500 1...</div>
<div class="t" style="left:5.5px;top:295.00px;font-size:6.2px;color:#2e2e2e;font-weight:normal;font-family:'Liberation Sans';transform:scaleX(0.953);">E$7</div>
<div class="t" style="left:22.7px;top:295.00px;font-size:6.2px;color:#2e2e2e;font-weight:normal;font-family:'Liberation Sans';transform:scaleX(0.782);">1X01</div>
<div class="t" style="left:74px;top:295.00px;font-size:6.2px;color:#2e2e2e;font-weight:normal;font-family:'Liberation Sans';transform:scaleX(0.793);">TOP</div>
<div class="t" style="left:98.3px;top:295.00px;font-size:6.2px;color:#2e2e2e;font-weight:normal;font-family:'Liberation Sans';transform:scaleX(0.666);">1</div>
<div class="t" style="left:126px;top:295.00px;font-size:6.2px;color:#2e2e2e;font-weight:normal;font-family:'Liberation Sans';transform:scaleX(0.918);">(1500 9...</div>
<div class="t" style="left:5.5px;top:301.00px;font-size:6.2px;color:#2e2e2e;font-weight:normal;font-family:'Liberation Sans';transform:scaleX(0.953);">E$8</div>
<div class="t" style="left:22.7px;top:301.00px;font-size:6.2px;color:#2e2e2e;font-weight:normal;font-family:'Liberation Sans';transform:scaleX(0.782);">1X01</div>
<div class="t" style="left:74px;top:301.00px;font-size:6.2px;color:#2e2e2e;font-weight:normal;font-family:'Liberation Sans';transform:scaleX(0.793);">TOP</div>
<div class="t" style="left:98.3px;top:301.00px;font-size:6.2px;color:#2e2e2e;font-weight:normal;font-family:'Liberation Sans';transform:scaleX(0.666);">1</div>
<div class="t" style="left:126px;top:301.00px;font-size:6.2px;color:#2e2e2e;font-weight:normal;font-family:'Liberation Sans';transform:scaleX(0.918);">(1700 1...</div>
<div class="t" style="left:5.5px;top:308.00px;font-size:6.2px;color:#2e2e2e;font-weight:normal;font-family:'Liberation Sans';transform:scaleX(0.953);">E$9</div>
<div class="t" style="left:22.7px;top:308.00px;font-size:6.2px;color:#2e2e2e;font-weight:normal;font-family:'Liberation Sans';transform:scaleX(0.782);">1X01</div>
<div class="t" style="left:74px;top:308.00px;font-size:6.2px;color:#2e2e2e;font-weight:normal;font-family:'Liberation Sans';transform:scaleX(0.793);">TOP</div>
<div class="t" style="left:98.3px;top:308.00px;font-size:6.2px;color:#2e2e2e;font-weight:normal;font-family:'Liberation Sans';transform:scaleX(0.666);">1</div>
<div class="t" style="left:126px;top:308.00px;font-size:6.2px;color:#2e2e2e;font-weight:normal;font-family:'Liberation Sans';transform:scaleX(0.918);">(1700 1...</div>
<div class="t" style="left:5.5px;top:314.00px;font-size:6.2px;color:#2e2e2e;font-weight:normal;font-family:'Liberation Sans';transform:scaleX(0.899);">E$10</div>
<div class="t" style="left:22.7px;top:314.00px;font-size:6.2px;color:#2e2e2e;font-weight:normal;font-family:'Liberation Sans';transform:scaleX(0.782);">1X01</div>
<div class="t" style="left:74px;top:314.00px;font-size:6.2px;color:#2e2e2e;font-weight:normal;font-family:'Liberation Sans';transform:scaleX(0.793);">TOP</div>
<div class="t" style="left:98.3px;top:314.00px;font-size:6.2px;color:#2e2e2e;font-weight:normal;font-family:'Liberation Sans';transform:scaleX(0.666);">1</div>
<div class="t" style="left:126px;top:314.00px;font-size:6.2px;color:#2e2e2e;font-weight:normal;font-family:'Liberation Sans';transform:scaleX(0.918);">(1700 9...</div>
<div class="t" style="left:4px;top:333.00px;font-size:6.2px;color:#2e2e2e;font-weight:normal;font-family:'Liberation Sans';transform:scaleX(0.859);">Items</div>
<div class="t" style="left:103px;top:333.00px;font-size:6.2px;color:#2e2e2e;font-weight:normal;font-family:'Liberation Sans';transform:scaleX(0.868);">0 of 0 shown (0 selected)</div>
<div class="t" style="left:17px;top:344.00px;font-size:6.2px;color:#9a9a9a;font-weight:normal;font-family:'Liberation Sans';transform:scaleX(0.765);">Search</div>
<div class="t" style="left:20px;top:357.00px;font-size:6.2px;color:#2e2e2e;font-weight:normal;font-family:'Liberation Sans';transform:scaleX(0.820);">Type</div>
<div class="t" style="left:60px;top:357.00px;font-size:6.2px;color:#2e2e2e;font-weight:normal;font-family:'Liberation Sans';transform:scaleX(0.787);">Name</div>
<div class="t" style="left:101px;top:357.00px;font-size:6.2px;color:#2e2e2e;font-weight:normal;font-family:'Liberation Sans';transform:scaleX(0.814);">Signal</div>
<div class="t" style="left:143px;top:357.00px;font-size:6.2px;color:#2e2e2e;font-weight:normal;font-family:'Liberation Sans';transform:scaleX(0.840);">Layer</div>
<div class="t" style="left:5px;top:443.00px;font-size:6.4px;color:#3a3a3a;font-weight:normal;font-family:'Liberation Mono';transform:scaleX(0.869);">Left-click on pad to start signal</div>
<div class="t" style="left:182.3px;top:75.00px;font-size:6.8px;color:#222;font-weight:normal;font-family:'Liberation Sans';transform:scaleX(0.890);">1 Top</div>
<div class="t" style="left:259px;top:75.00px;font-size:6.2px;color:#2e2e2e;font-weight:normal;font-family:'Liberation Sans';transform:scaleX(0.850);">50 mil (350 750)</div>
<div class="t" style="left:318px;top:75.00px;font-size:6.2px;color:#8a8a8a;font-weight:normal;font-family:'Liberation Sans';transform:scaleX(0.810);">Click or press Slash to activate command line mode</div>
<div class="t" style="left:517px;top:75.00px;font-size:5.0px;color:#8a8a8a;font-weight:normal;font-family:'Liberation Sans';transform:scaleX(0.818);-webkit-text-stroke:0">SIGNAL</div>
<div class="t" style="left:514px;top:89.00px;font-size:6.2px;color:#2e2e2e;font-weight:normal;font-family:'Liberation Sans';transform:scaleX(0.731);">Net Class</div>
<div class="t" style="left:539px;top:89.00px;font-size:6.2px;color:#333;font-weight:normal;font-family:'Liberation Sans';transform:scaleX(0.842);">0 default</div>
<div class="t" style="left:581px;top:104.00px;font-size:5.8px;color:#9a9a9a;font-weight:normal;font-family:'Liberation Sans';transform:scaleX(0.834);">OK</div>
<div class="t" style="left:606px;top:104.00px;font-size:5.8px;color:#8a8a8a;font-weight:normal;font-family:'Liberation Sans';transform:scaleX(0.887);">Cancel</div>
<div class="t" style="left:643.8px;top:73.00px;font-size:5.0px;color:#8a8a8a;font-weight:normal;font-family:'Liberation Sans';transform:scaleX(0.804);-webkit-text-stroke:0">INSPECTOR</div>
<div class="t" style="left:694.8px;top:84.00px;font-size:6.4px;color:#222;font-weight:bold;font-family:'Liberation Sans';transform:scaleX(0.843);">Nothing Selected</div>
<div class="t" style="left:644.9px;top:96.00px;font-size:6.8px;color:#2a2a2a;font-weight:bold;font-family:'Liberation Sans';transform:scaleX(0.837);">Board Information</div>
<div class="t" style="left:634.7px;top:107.00px;font-size:5.3px;color:#3a3a3a;font-weight:bold;font-family:'Liberation Sans';transform:scaleX(1.059);">Dimensions</div>
<div class="t" style="left:634.7px;top:134.00px;font-size:5.3px;color:#3a3a3a;font-weight:bold;font-family:'Liberation Sans';transform:scaleX(1.078);">Elements</div>
<div class="t" style="left:634.7px;top:171.00px;font-size:5.3px;color:#3a3a3a;font-weight:bold;font-family:'Liberation Sans';transform:scaleX(1.067);">Signals</div>
<div class="t" style="left:634.7px;top:198.00px;font-size:5.3px;color:#3a3a3a;font-weight:bold;font-family:'Liberation Sans';transform:scaleX(1.153);">Primitives</div>
<div class="t" style="left:683.1px;top:107.00px;font-size:5.8px;color:#5a5a5a;font-weight:normal;font-family:'Liberation Sans';transform:scaleX(0.882);">Width:</div>
<div class="t" style="left:716.8px;top:107.00px;font-size:5.8px;color:#484848;font-weight:normal;font-family:'Liberation Sans';transform:scaleX(0.801);">100.1524 mm</div>
<div class="t" style="left:683.1px;top:116.00px;font-size:5.8px;color:#5a5a5a;font-weight:normal;font-family:'Liberation Sans';transform:scaleX(0.833);">Height:</div>
<div class="t" style="left:716.8px;top:116.00px;font-size:5.8px;color:#484848;font-weight:normal;font-family:'Liberation Sans';transform:scaleX(0.788);">50.1524 mm</div>
<div class="t" style="left:683.1px;top:134.00px;font-size:5.8px;color:#5a5a5a;font-weight:normal;font-family:'Liberation Sans';transform:scaleX(0.844);">Total:</div>
<div class="t" style="left:716.8px;top:134.00px;font-size:5.8px;color:#484848;font-weight:normal;font-family:'Liberation Sans';transform:scaleX(0.728);">16</div>
<div class="t" style="left:683.1px;top:144.00px;font-size:5.8px;color:#5a5a5a;font-weight:normal;font-family:'Liberation Sans';transform:scaleX(0.802);">Top:</div>
<div class="t" style="left:716.8px;top:144.00px;font-size:5.8px;color:#484848;font-weight:normal;font-family:'Liberation Sans';transform:scaleX(0.728);">16</div>
<div class="t" style="left:683.1px;top:153.00px;font-size:5.8px;color:#5a5a5a;font-weight:normal;font-family:'Liberation Sans';transform:scaleX(0.881);">Bottom:</div>
<div class="t" style="left:716.8px;top:153.00px;font-size:5.8px;color:#484848;font-weight:normal;font-family:'Liberation Sans';transform:scaleX(0.989);">0</div>
<div class="t" style="left:683.1px;top:171.00px;font-size:5.8px;color:#5a5a5a;font-weight:normal;font-family:'Liberation Sans';transform:scaleX(0.844);">Total:</div>
<div class="t" style="left:716.8px;top:171.00px;font-size:5.8px;color:#484848;font-weight:normal;font-family:'Liberation Sans';transform:scaleX(0.989);">2</div>
<div class="t" style="left:683.1px;top:180.00px;font-size:5.8px;color:#5a5a5a;font-weight:normal;font-family:'Liberation Sans';transform:scaleX(0.850);">Airwires:</div>
<div class="t" style="left:716.8px;top:180.00px;font-size:5.8px;color:#484848;font-weight:normal;font-family:'Liberation Sans';transform:scaleX(0.728);">10</div>
<div class="t" style="left:683.1px;top:198.00px;font-size:5.8px;color:#5a5a5a;font-weight:normal;font-family:'Liberation Sans';transform:scaleX(0.789);">Pads:</div>
<div class="t" style="left:716.8px;top:198.00px;font-size:5.8px;color:#484848;font-weight:normal;font-family:'Liberation Sans';transform:scaleX(0.728);">23</div>
<div class="t" style="left:683.1px;top:208.00px;font-size:5.8px;color:#5a5a5a;font-weight:normal;font-family:'Liberation Sans';transform:scaleX(0.774);">Vias:</div>
<div class="t" style="left:716.8px;top:208.00px;font-size:5.8px;color:#484848;font-weight:normal;font-family:'Liberation Sans';transform:scaleX(0.989);">0</div>
<div class="t" style="left:683.1px;top:217.00px;font-size:5.8px;color:#5a5a5a;font-weight:normal;font-family:'Liberation Sans';transform:scaleX(0.827);">Holes:</div>
<div class="t" style="left:716.8px;top:217.00px;font-size:5.8px;color:#484848;font-weight:normal;font-family:'Liberation Sans';transform:scaleX(0.989);">0</div>
<div class="t" style="left:683.1px;top:226.00px;font-size:5.8px;color:#5a5a5a;font-weight:normal;font-family:'Liberation Sans';transform:scaleX(0.826);">Copper Pours:</div>
<div class="t" style="left:716.8px;top:226.00px;font-size:5.8px;color:#484848;font-weight:normal;font-family:'Liberation Sans';transform:scaleX(0.989);">0</div>
<div class="t" style="left:644px;top:257.00px;font-size:5.0px;color:#777;font-weight:normal;font-family:'Liberation Sans';transform:scaleX(0.794);-webkit-text-stroke:0">SELECTION FILTER</div>
<div class="t" style="left:634.2px;top:264.00px;font-size:6.2px;color:#333;font-weight:normal;font-family:'Liberation Sans';transform:scaleX(0.775);">Types</div>
<div class="t" style="left:644.7px;top:274.00px;font-size:6.2px;color:#f4f9fd;font-weight:normal;font-family:'Liberation Sans';transform:scaleX(0.861);">Airwire</div>
<div class="t" style="left:644.7px;top:282.00px;font-size:6.2px;color:#f4f9fd;font-weight:normal;font-family:'Liberation Sans';transform:scaleX(0.859);">Attribute</div>
<div class="t" style="left:644.7px;top:291.00px;font-size:6.2px;color:#f4f9fd;font-weight:normal;font-family:'Liberation Sans';transform:scaleX(0.714);">Circle</div>
<div class="t" style="left:644.7px;top:299.00px;font-size:6.2px;color:#f4f9fd;font-weight:normal;font-family:'Liberation Sans';transform:scaleX(0.787);">Device</div>
<div class="t" style="left:644.7px;top:307.00px;font-size:6.2px;color:#f4f9fd;font-weight:normal;font-family:'Liberation Sans';transform:scaleX(0.780);">Dimension</div>
<div class="t" style="left:644.7px;top:316.00px;font-size:6.2px;color:#f4f9fd;font-weight:normal;font-family:'Liberation Sans';transform:scaleX(0.771);">Frame</div>
<div class="t" style="left:644.7px;top:324.00px;font-size:6.2px;color:#f4f9fd;font-weight:normal;font-family:'Liberation Sans';transform:scaleX(0.802);">Group</div>
<div class="t" style="left:633.8px;top:337.00px;font-size:6.2px;color:#333;font-weight:normal;font-family:'Liberation Sans';transform:scaleX(0.764);">Layers</div>
<div class="t" style="left:636px;top:346.00px;font-size:6.0px;color:#2e2e2e;font-weight:normal;font-family:'Liberation Sans';transform:scaleX(0.840);">&lt;All&gt;</div>
<div class="t" style="left:636px;top:353.00px;font-size:6.0px;color:#2e2e2e;font-weight:normal;font-family:'Liberation Sans';transform:scaleX(0.878);">&lt;Preset_Bottom&gt;</div>
<div class="t" style="left:636px;top:359.00px;font-size:6.0px;color:#2e2e2e;font-weight:normal;font-family:'Liberation Sans';transform:scaleX(0.855);">&lt;Preset_Standard&gt;</div>
<div class="t" style="left:636px;top:366.00px;font-size:6.0px;color:#2e2e2e;font-weight:normal;font-family:'Liberation Sans';transform:scaleX(0.883);">&lt;Preset_Top&gt;</div>
<div class="t" style="left:645px;top:382.00px;font-size:6.2px;color:#f4f9fd;font-weight:normal;font-family:'Liberation Sans';transform:scaleX(0.865);">1 Top</div>
<div class="t" style="left:645px;top:390.00px;font-size:6.2px;color:#f4f9fd;font-weight:normal;font-family:'Liberation Sans';transform:scaleX(0.868);">16 Bottom</div>
<div class="t" style="left:645px;top:399.00px;font-size:6.2px;color:#f4f9fd;font-weight:normal;font-family:'Liberation Sans';transform:scaleX(0.792);">17 Pads</div>
<div class="t" style="left:645px;top:407.00px;font-size:6.2px;color:#f4f9fd;font-weight:normal;font-family:'Liberation Sans';transform:scaleX(0.779);">18 Vias</div>
<div class="t" style="left:645px;top:415.00px;font-size:6.2px;color:#f4f9fd;font-weight:normal;font-family:'Liberation Sans';transform:scaleX(0.851);">19 Unrouted</div>
<div class="t" style="left:782.5px;top:430.00px;font-size:5.6px;color:#333;font-weight:normal;font-family:'Liberation Sans';transform:scaleX(1.026);">Reset</div>
</body></html>
